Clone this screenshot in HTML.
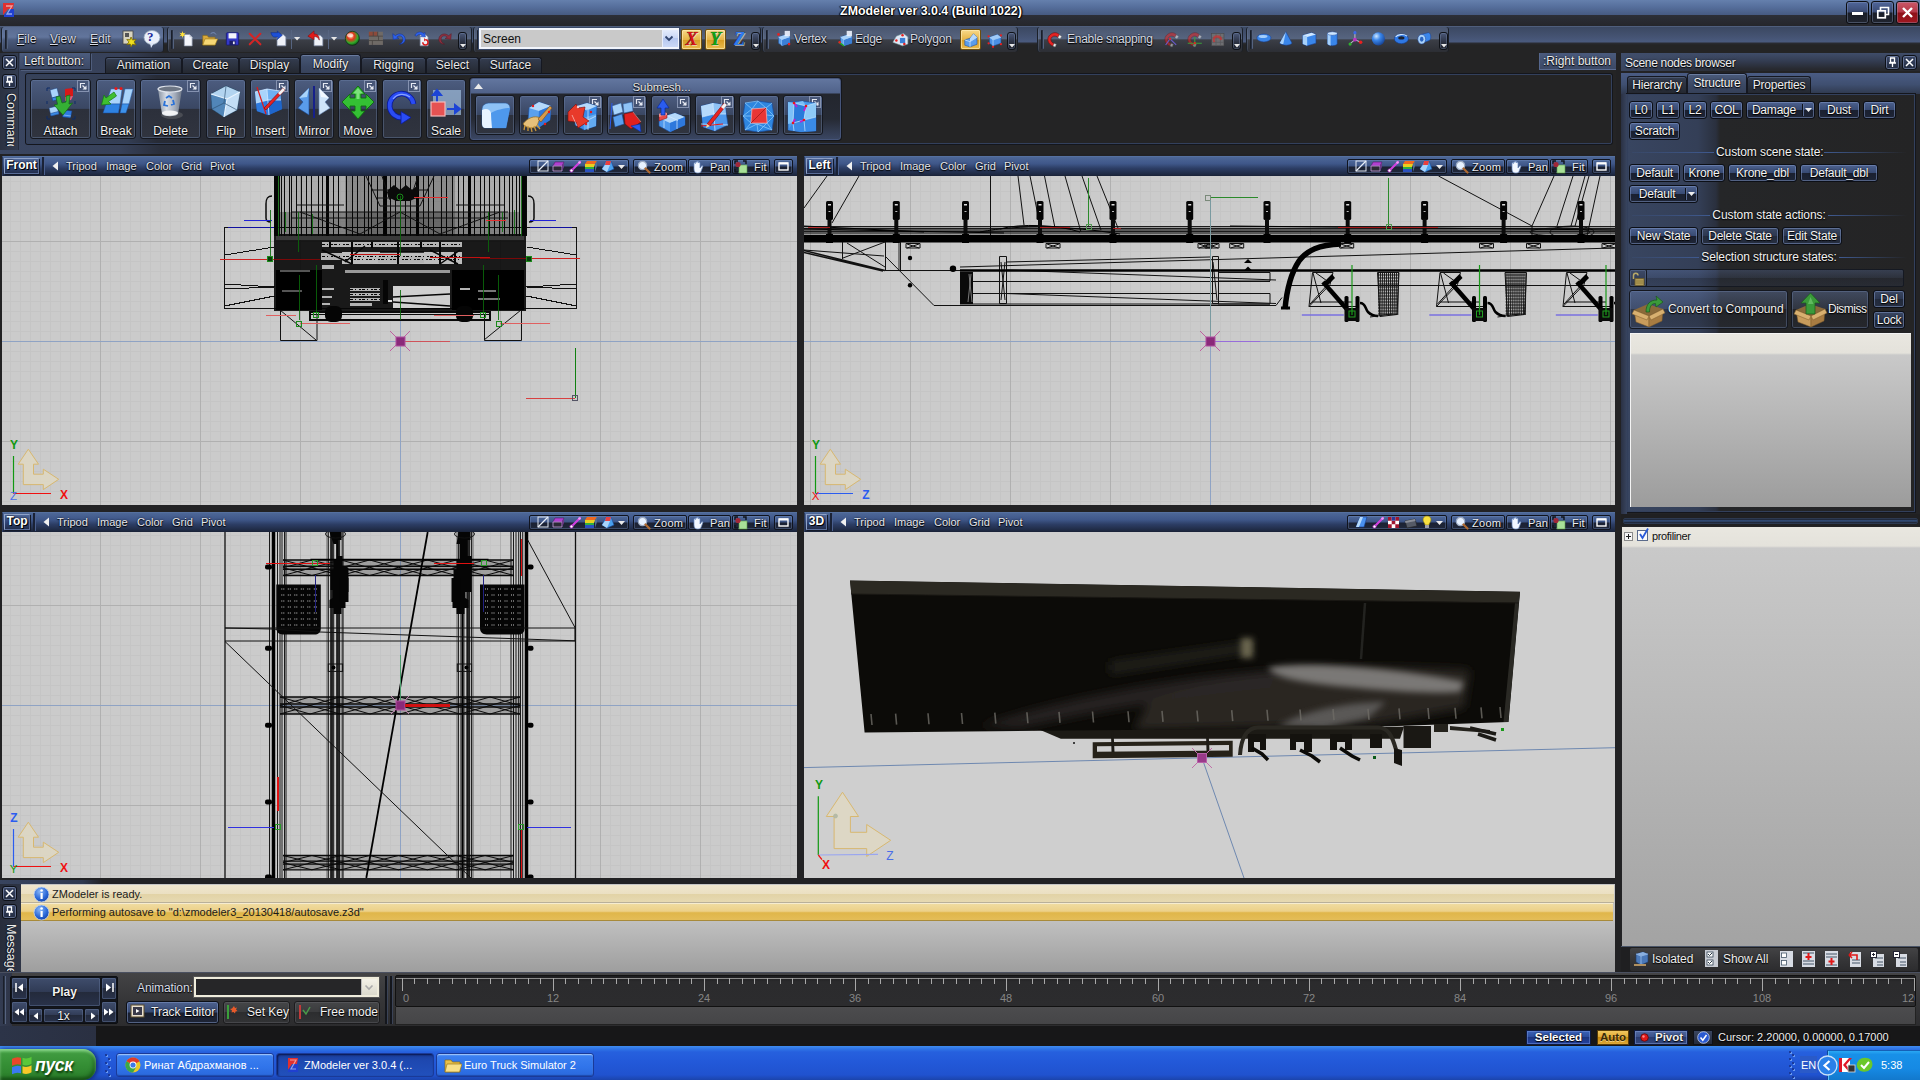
<!DOCTYPE html><html><head><meta charset="utf-8"><title>ZModeler ver 3.0.4 (Build 1022)</title><style>
html,body{margin:0;padding:0;background:#222224;}
body{width:1920px;height:1080px;overflow:hidden;position:relative;font-family:"Liberation Sans",sans-serif;font-size:12px;color:#f0f0f0;}
div,span,svg{position:absolute;box-sizing:border-box;white-space:nowrap;}
.t{text-shadow:0 1px 1px #000,0 0 2px rgba(0,0,0,.8);}
.btn{border:1px solid #11141b;border-radius:3px;background:linear-gradient(#3c4a66,#2d3850 50%,#252d3f 50%,#2a3346);box-shadow:inset 0 0 0 1px rgba(110,130,170,.35);text-align:center;}
.tb{border:1px solid #10131a;border-radius:2px;background:linear-gradient(#33405b,#2a344a 50%,#222a3b 50%,#262e40);box-shadow:inset 0 0 0 1px rgba(105,125,165,.35);text-align:center;line-height:15px;}
.tab{border:1px solid #151821;border-bottom:none;border-radius:3px 3px 0 0;background:linear-gradient(#343d50,#23272f);text-align:center;box-shadow:inset 0 1px 0 rgba(120,140,180,.35);}
.vh{background:linear-gradient(#3d5384,#30436d 45%,#26365b);border-top:1px solid #4a5f8e;}
.vl{color:#e8e8e8;font-size:11.5px;line-height:17px;top:1px;}
</style></head><body>
<div style="left:0px;top:0px;width:1920px;height:15px;background:linear-gradient(#6580ad,#566f9c 45%,#465a82);"></div>
<div style="left:0px;top:15px;width:1920px;height:11px;background:linear-gradient(#2c2f38,#25262b);"></div>
<svg style="left:2px;top:2px" width="14" height="17" viewBox="0 0 14 17"><path d="M1 1h11l-1 6-5 0-5 6z" fill="#e03030"/><path d="M12 4v11H2l0-2 6-6h4z" fill="#2040d0"/><path d="M4 4h6l-5 8h5" stroke="#fff" stroke-width="1.3" fill="none" opacity=".55"/></svg>
<div style="left:760px;top:3px;width:342px;height:16px;text-align:center;font-weight:bold;font-size:12.4px;color:#fff;text-shadow:0 0 2px #000,0 1px 1px #000,1px 0 1px #000,-1px 0 1px #000;line-height:16px">ZModeler ver 3.0.4 (Build 1022)</div>
<div style="left:1846px;top:1px;width:23px;height:23px;background:linear-gradient(#50669a,#3a4a72 48%,#1a1e28 52%,#20242e);border:1px solid #0c0e13;border-radius:3px;box-shadow:inset 0 0 0 1px rgba(150,165,200,.35);"></div>
<div style="left:1871px;top:1px;width:23px;height:23px;background:linear-gradient(#50669a,#3a4a72 48%,#1a1e28 52%,#20242e);border:1px solid #0c0e13;border-radius:3px;box-shadow:inset 0 0 0 1px rgba(150,165,200,.35);"></div>
<div style="left:1896px;top:1px;width:23px;height:23px;background:linear-gradient(#cc5868,#b43848 48%,#8e1018 52%,#a01820);border:1px solid #0c0e13;border-radius:3px;box-shadow:inset 0 0 0 1px rgba(150,165,200,.35);"></div>
<div style="left:1852px;top:12px;width:11px;height:3px;background:#fff;box-shadow:0 0 1px #000"></div>
<svg style="left:1875px;top:5px" width="16" height="16" viewBox="0 0 16 16"><path d="M5.5 5V2.500h8v7H11" stroke="#fff" stroke-width="1.6" fill="none"/><rect x="2.800" y="5.800" width="7.500" height="7" stroke="#fff" stroke-width="1.7" fill="none"/></svg>
<svg style="left:1900px;top:5px" width="16" height="16" viewBox="0 0 16 16"><path d="M3 3l9 9M12 3l-9 9" stroke="#fff" stroke-width="2.400"/></svg>
<div style="left:0px;top:26px;width:1920px;height:27px;background:linear-gradient(#3b4862 0,#43516f 8px,#4a5a7e 15px,#2a2c33 16px,#242425 18px);border-top:1px solid #4f5e7c;"></div>
<div style="left:1px;top:27px;width:163px;height:25px;background:linear-gradient(#596b90,#62759c 40%,#4a5a7c 52%,#3a4661 90%,#2f384d);border-left:1px solid #1b2029;border-right:1px solid #1b2029;border-radius:3px;box-shadow:inset 1px 0 0 rgba(120,140,180,.25);"></div>
<div style="left:5px;top:30px;width:3px;height:19px;background:#2a3243;border-left:1px solid #1a1f2a;border-right:1px solid #55637f;border-radius:1px;"></div>
<div style="left:167px;top:27px;width:305px;height:25px;background:linear-gradient(#4a566f,#56647f 46%,#3b3e46 52%,#2c2e34);border-left:1px solid #1b2029;border-right:1px solid #1b2029;border-radius:3px;box-shadow:inset 1px 0 0 rgba(120,140,180,.25);"></div>
<div style="left:171px;top:30px;width:3px;height:19px;background:#2a3243;border-left:1px solid #1a1f2a;border-right:1px solid #55637f;border-radius:1px;"></div>
<div style="left:473px;top:27px;width:288px;height:25px;background:linear-gradient(#4a566f,#56647f 46%,#3b3e46 52%,#2c2e34);border-left:1px solid #1b2029;border-right:1px solid #1b2029;border-radius:3px;box-shadow:inset 1px 0 0 rgba(120,140,180,.25);"></div>
<div style="left:477px;top:30px;width:3px;height:19px;background:#2a3243;border-left:1px solid #1a1f2a;border-right:1px solid #55637f;border-radius:1px;"></div>
<div style="left:762px;top:27px;width:256px;height:25px;background:linear-gradient(#4a566f,#56647f 46%,#3b3e46 52%,#2c2e34);border-left:1px solid #1b2029;border-right:1px solid #1b2029;border-radius:3px;box-shadow:inset 1px 0 0 rgba(120,140,180,.25);"></div>
<div style="left:766px;top:30px;width:3px;height:19px;background:#2a3243;border-left:1px solid #1a1f2a;border-right:1px solid #55637f;border-radius:1px;"></div>
<div style="left:1037px;top:27px;width:206px;height:25px;background:linear-gradient(#4a566f,#56647f 46%,#3b3e46 52%,#2c2e34);border-left:1px solid #1b2029;border-right:1px solid #1b2029;border-radius:3px;box-shadow:inset 1px 0 0 rgba(120,140,180,.25);"></div>
<div style="left:1041px;top:30px;width:3px;height:19px;background:#2a3243;border-left:1px solid #1a1f2a;border-right:1px solid #55637f;border-radius:1px;"></div>
<div style="left:1246px;top:27px;width:203px;height:25px;background:linear-gradient(#4a566f,#56647f 46%,#3b3e46 52%,#2c2e34);border-left:1px solid #1b2029;border-right:1px solid #1b2029;border-radius:3px;box-shadow:inset 1px 0 0 rgba(120,140,180,.25);"></div>
<div style="left:1250px;top:30px;width:3px;height:19px;background:#2a3243;border-left:1px solid #1a1f2a;border-right:1px solid #55637f;border-radius:1px;"></div>
<div class="t" style="left:17px;top:31px;font-size:12px;color:#d8dce6;line-height:16px"><u>F</u>ile</div>
<div class="t" style="left:50px;top:31px;font-size:12px;color:#d8dce6;line-height:16px"><u>V</u>iew</div>
<div class="t" style="left:90px;top:31px;font-size:12px;color:#d8dce6;line-height:16px"><u>E</u>dit</div>
<svg style="left:122px;top:29px" width="18" height="20" viewBox="0 0 18 20"><rect x="1" y="2" width="10" height="13" fill="#d8d4c0" stroke="#444" stroke-width=".8"/><rect x="3" y="4" width="4" height="4" fill="#555"/><path d="M9 8l1.500 3 3.500-.5-2 2.500 2 3-3.500-.800L9 18l-.8-3-3.200.500 2-2.600-2.200-2.400 3.300.300z" fill="#f0e020" stroke="#7a6a00" stroke-width=".8"/></svg>
<svg style="left:142px;top:29px" width="20" height="20" viewBox="0 0 20 20"><ellipse cx="10" cy="8.500" rx="8" ry="7" fill="#eaf0fb" stroke="#9ab" stroke-width=".8"/><path d="M8 14l1 5 3-5z" fill="#dfe8f8"/></svg>
<div style="left:147px;top:29px;font-size:13px;font-weight:bold;color:#1c2a9a;font-family:'Liberation Serif',serif;line-height:16px">?</div>
<svg style="left:179.1px;top:31.1px" width="15.8" height="15.8" viewBox="0 0 18 18"><path d="M6 4h6l3 3v10H6z" fill="#f4f6fb" stroke="#8a94a8" stroke-width=".8"/><path d="M12 4v3h3z" fill="#c5ccd9"/><path d="M4 0l.8 2.500L7.500 2 5.500 4l2 2-2.700-.5L4 8l-.8-2.500L.5 6l2-2-2-2 2.700.5z" fill="#ffe23a"/></svg>
<svg style="left:201.2px;top:31.1px" width="17.6" height="15.8" viewBox="0 0 20 18"><path d="M2 5h5l1.500 2H16v9H2z" fill="#d9a93a" stroke="#8c6a14" stroke-width=".7"/><path d="M4.500 9H19l-3 7H2z" fill="#f7d774" stroke="#9c7a1c" stroke-width=".7"/><path d="M11 3c3-2 5-1 6 1" stroke="#7f98c8" fill="none" stroke-width="1"/></svg>
<svg style="left:225.0px;top:31.1px" width="15.0" height="15.8" viewBox="0 0 17 18"><rect x="1.500" y="2" width="14" height="14" rx="1" fill="#3438c8" stroke="#15186e" stroke-width=".9"/><rect x="4" y="2.500" width="9" height="6" fill="#f3f4fa"/><rect x="5" y="11" width="7" height="5" fill="#1b1d66"/><rect x="9" y="12" width="2" height="3" fill="#e8e8f4"/></svg>
<svg style="left:248.0px;top:32.0px" width="15.0" height="14.1" viewBox="0 0 17 16"><path d="M2 2l12 12M14 2L2 14" stroke="#d42525" stroke-width="2.300" stroke-linecap="round"/></svg>
<svg style="left:270.2px;top:30.2px" width="17.6" height="17.6" viewBox="0 0 20 20"><path d="M8 5h7l3 3v10H8z" fill="#eef1f8" stroke="#7e8ba6" stroke-width=".8"/><path d="M1 3h8l-1-2 6 5-6 5 1-3H5c-2 0-3-2-4-5z" fill="#1d50d6" stroke="#0b2a86" stroke-width=".6"/></svg>
<div style="left:291px;top:30px;width:1px;height:19px;background:#1a1e27;border-right:1px solid #566480"></div>
<svg style="left:294.4px;top:37.3px" width="6.2" height="4.4" viewBox="0 0 7 5"><path d="M0 0h7L3.500 4z" fill="#e6e6e6"/></svg>
<svg style="left:307.2px;top:30.2px" width="17.6" height="17.6" viewBox="0 0 20 20"><path d="M8 6h7l3 3v9H8z" fill="#eef1f8" stroke="#7e8ba6" stroke-width=".8"/><path d="M1 7l7-6v3.500c4 0 6 2 6 7-1.500-3-3-4-6-4V11z" fill="#e01b1b" stroke="#7c0a0a" stroke-width=".6"/></svg>
<div style="left:328px;top:30px;width:1px;height:19px;background:#1a1e27;border-right:1px solid #566480"></div>
<svg style="left:331.4px;top:37.3px" width="6.2" height="4.4" viewBox="0 0 7 5"><path d="M0 0h7L3.500 4z" fill="#e6e6e6"/></svg>
<svg style="left:344.1px;top:30.1px" width="16.7" height="16.7" viewBox="0 0 19 19"><defs><radialGradient id="sg" cx=".4" cy=".35" r=".7"><stop offset="0" stop-color="#ffd9a0"/><stop offset=".35" stop-color="#e5341e"/><stop offset=".7" stop-color="#2fae2a"/><stop offset="1" stop-color="#0a3d12"/></radialGradient></defs><circle cx="9.500" cy="9.500" r="8" fill="url(#sg)" stroke="#0c2b10" stroke-width=".8"/><ellipse cx="7" cy="6" rx="3.500" ry="2.300" fill="#fff" opacity=".6"/></svg>
<svg style="left:368.1px;top:30.1px" width="16.7" height="16.7" viewBox="0 0 19 19"><rect x="1" y="2" width="16" height="15" fill="#6f6a66"/><rect x="1" y="2" width="10" height="5" fill="#8d4a3a"/><path d="M1 7h16M1 12h16M6 2v5M12 7v5M5 12v5M11 2v5" stroke="#4a4643" stroke-width="1"/></svg>
<svg style="left:391.0px;top:31.0px" width="15.0" height="15.0" viewBox="0 0 17 17"><path d="M3 3v6h6" fill="none" stroke="#2a59e0" stroke-width="0"/><path d="M2 3l.5 6.500L9 8.500 6.500 7C9 4.500 13 5 13.500 9c.3 3-1.500 5-4 6 4.500 0 7-3 6.500-6.500C15.300 3.500 9 1.500 5 5.300z" fill="#2e62ea" stroke="#0f2e96" stroke-width=".6"/></svg>
<svg style="left:414.1px;top:30.2px" width="16.7" height="17.6" viewBox="0 0 19 20"><path d="M7 5h6l3 3v10H7z" fill="#eef1f8" stroke="#7e8ba6" stroke-width=".8"/><path d="M1 6c2-4 7-5 10-2l1.500-1.500.5 5.500-5.500-.5L9 6C7 4.500 4 5 3 7z" fill="#2e62ea" stroke="#0f2e96" stroke-width=".5"/><path d="M10 14a3 3 0 1 0 3-3" stroke="#d81e1e" stroke-width="1.700" fill="none"/><path d="M11.500 9l2 2-2 2.200z" fill="#d81e1e"/></svg>
<svg style="left:438.0px;top:31.0px" width="15.0" height="15.0" viewBox="0 0 17 17"><path d="M15 3l-.5 6.500L8 8.500 10.500 7C8 4.500 4 5 3.500 9c-.3 3 1.500 5 4 6-4.500 0-7-3-6.500-6.500C1.700 3.500 8 1.500 12 5.300z" fill="#8e3040" stroke="#5a1a26" stroke-width=".6"/></svg>
<div style="left:458px;top:32px;width:9px;height:18px;background:linear-gradient(#4a5878,#2a3040 60%,#1d212b);border:1px solid #0f1218;border-radius:3px;box-shadow:inset 0 0 0 1px rgba(130,145,180,.35);"></div>
<svg style="left:459.5px;top:44px" width="6" height="4"><path d="M0 0h6l-3 3.500z" fill="#e8e8e8"/></svg>
<div style="left:479px;top:28px;width:200px;height:21px;background:#c9c9c9;border:2px solid #f2f5fc;border-right-width:1px;box-shadow:0 0 0 1px #3a4a6a;"></div>
<div style="left:483px;top:31px;color:#111;font-size:12px;line-height:16px">Screen</div>
<div style="left:662px;top:30px;width:16px;height:17px;background:linear-gradient(#e4ecfc,#c8d6f6 50%,#b6c8f0 50%,#cad8f6);border-left:1px solid #e8eefa;"></div>
<svg style="left:664px;top:35px" width="10" height="8" viewBox="0 0 10 8"><path d="M1.500 1.500L5 5l3.500-3.500" stroke="#31456f" stroke-width="1.800" fill="none"/></svg>
<div style="left:681px;top:29px;width:21px;height:21px;background:linear-gradient(#f7d98a,#e6b547 50%,#d69a20 50%,#e9bb4e);border:1px solid #6e4e0c;border-radius:2px;box-shadow:inset 0 0 0 1px rgba(255,240,190,.6);"></div>
<div style="left:681px;top:29px;width:21px;height:21px;text-align:center;font:italic bold 18px/21px 'Liberation Serif',serif;color:#d81414;text-shadow:1px 1px 0 rgba(255,255,255,.55),0 0 1px #000">X</div>
<div style="left:705px;top:29px;width:21px;height:21px;background:linear-gradient(#f7d98a,#e6b547 50%,#d69a20 50%,#e9bb4e);border:1px solid #6e4e0c;border-radius:2px;box-shadow:inset 0 0 0 1px rgba(255,240,190,.6);"></div>
<div style="left:705px;top:29px;width:21px;height:21px;text-align:center;font:italic bold 18px/21px 'Liberation Serif',serif;color:#12a012;text-shadow:1px 1px 0 rgba(255,255,255,.55),0 0 1px #000">Y</div>
<div style="left:729px;top:29px;width:21px;height:21px;text-align:center;font:italic bold 18px/21px 'Liberation Serif',serif;color:#2f7af0;text-shadow:1px 1px 0 rgba(255,255,255,.55),0 0 1px #000">Z</div>
<div style="left:751px;top:32px;width:9px;height:18px;background:linear-gradient(#4a5878,#2a3040 60%,#1d212b);border:1px solid #0f1218;border-radius:3px;box-shadow:inset 0 0 0 1px rgba(130,145,180,.35);"></div>
<svg style="left:752.5px;top:44px" width="6" height="4"><path d="M0 0h6l-3 3.500z" fill="#e8e8e8"/></svg>
<svg style="left:775.2px;top:30.2px" width="17.6" height="17.6" viewBox="0 0 20 20"><path d="M4 8l9-3 4 3v7l-9 3-4-3z" fill="#5ea0ea" stroke="#1f4f9c" stroke-width=".6"/><path d="M4 8l4 3 9-3M8 11v7" stroke="#bfe0ff" stroke-width=".8" fill="none"/><path d="M8 11l9-3v7l-9 3z" fill="#3b7fd6"/><path d="M4 8l9-3 4 3-9 3z" fill="#a9d2fb"/><circle cx="4" cy="5" r="1.500" fill="#e82020"/><circle cx="16" cy="16" r="1.500" fill="#e82020"/><rect x="11" y="1" width="6" height="6" fill="#eef4ff" opacity=".9"/></svg>
<div class="t" style="left:794px;top:31px;color:#d4d8e2;line-height:16px;letter-spacing:-.25px">Vertex</div>
<svg style="left:837.2px;top:30.2px" width="17.6" height="17.6" viewBox="0 0 20 20"><path d="M4 8l9-3 4 3v7l-9 3-4-3z" fill="#5ea0ea" stroke="#1f4f9c" stroke-width=".6"/><path d="M4 8l4 3 9-3M8 11v7" stroke="#bfe0ff" stroke-width=".8" fill="none"/><path d="M8 11l9-3v7l-9 3z" fill="#3b7fd6"/><path d="M4 8l9-3 4 3-9 3z" fill="#a9d2fb"/><path d="M2 14l6 4" stroke="#20b020" stroke-width="1.500"/><circle cx="3" cy="14" r="1.400" fill="#e82020"/><rect x="11" y="1" width="6" height="6" fill="#eef4ff" opacity=".9"/></svg>
<div class="t" style="left:855px;top:31px;color:#d4d8e2;line-height:16px;letter-spacing:-.25px">Edge</div>
<svg style="left:892.2px;top:30.2px" width="17.6" height="17.6" viewBox="0 0 20 20"><path d="M1 14l4-7 8-3 5 4v8l-6 2z" fill="#dfe8f6" stroke="#8aa" stroke-width=".6"/><rect x="9" y="9" width="6" height="6" fill="#3b7fd6"/><circle cx="5" cy="12" r="1.400" fill="#e82020"/><circle cx="12" cy="6" r="1.400" fill="#e82020"/><circle cx="14" cy="16" r="1.400" fill="#e82020"/></svg>
<div class="t" style="left:910px;top:31px;color:#d4d8e2;line-height:16px;letter-spacing:-.25px">Polygon</div>
<div style="left:960px;top:29px;width:21px;height:21px;background:linear-gradient(#f7d98a,#e6b547 50%,#d69a20 50%,#e9bb4e);border:1px solid #6e4e0c;border-radius:2px;box-shadow:inset 0 0 0 1px rgba(255,240,190,.6);"></div>
<svg style="left:963.1px;top:32.1px" width="15.8" height="15.8" viewBox="0 0 18 18"><path d="M2 9l6-2 4-5 4 4v8l-8 3-6-2z" fill="#5a9cea" stroke="#1c4a96" stroke-width=".6"/><path d="M2 9l6 2 8-5M8 11v6" stroke="#d5ebff" stroke-width=".8" fill="none"/><path d="M8 7l4-5 4 4-8 5z" fill="#b7d9fc"/></svg>
<svg style="left:986.2px;top:31.2px" width="17.6" height="17.6" viewBox="0 0 20 20"><path d="M4 7l9-3 4 3v7l-9 3-4-3z" fill="#4a90e6" stroke="#1f4f9c" stroke-width=".6"/><path d="M4 7l4 3 9-3M8 10v7" stroke="#bfe0ff" stroke-width=".8" fill="none"/><path d="M4 7l9-3 4 3-9 3z" fill="#9fcaf8"/><circle cx="3" cy="6" r="1.300" fill="#e82020"/><circle cx="17" cy="5" r="1.300" fill="#e82020"/><circle cx="8" cy="18" r="1.300" fill="#e82020"/><circle cx="17" cy="15" r="1.300" fill="#e82020"/><circle cx="3" cy="14" r="1.300" fill="#e82020"/></svg>
<div style="left:1007px;top:32px;width:9px;height:18px;background:linear-gradient(#4a5878,#2a3040 60%,#1d212b);border:1px solid #0f1218;border-radius:3px;box-shadow:inset 0 0 0 1px rgba(130,145,180,.35);"></div>
<svg style="left:1008.5px;top:44px" width="6" height="4"><path d="M0 0h6l-3 3.500z" fill="#e8e8e8"/></svg>
<svg style="left:1046.2px;top:30.2px" width="17.6" height="17.6" viewBox="0 0 20 20"><g opacity="1" transform="rotate(-40 10 10)"><path d="M3 15C0 9 3 3 9 3c5 0 8 3 8 7l-3.500 1c0-2.500-2-4.500-4.500-4.500-3.500 0-5 3.500-3 7.500z" fill="#e32424" stroke="#6a0a0a" stroke-width=".6"/><path d="M3 15l3-1.500 1.300 2.500-3 1.500zM13.500 11l3.500-1 .8 3-3.500 1z" fill="#ececec" stroke="#666" stroke-width=".5"/></g></svg>
<div class="t" style="left:1067px;top:31px;color:#d4d8e2;line-height:16px;letter-spacing:-.25px">Enable snapping</div>
<svg style="left:1163.2px;top:30.2px" width="17.6" height="17.6" viewBox="0 0 20 20"><g opacity=".55" transform="rotate(-40 10 10)"><path d="M3 15C0 9 3 3 9 3c5 0 8 3 8 7l-3.500 1c0-2.500-2-4.500-4.500-4.500-3.500 0-5 3.500-3 7.500z" fill="#e32424" stroke="#6a0a0a" stroke-width=".6"/><path d="M3 15l3-1.500 1.300 2.500-3 1.500zM13.500 11l3.500-1 .8 3-3.500 1z" fill="#ececec" stroke="#666" stroke-width=".5"/></g><path d="M3 17l5-7 7 7" stroke="#6a5acd" stroke-width="1.200" fill="none"/><circle cx="8" cy="10" r="1.300" fill="#e82020"/></svg>
<svg style="left:1186.2px;top:30.2px" width="17.6" height="17.6" viewBox="0 0 20 20"><g opacity=".55" transform="rotate(-40 10 10)"><path d="M3 15C0 9 3 3 9 3c5 0 8 3 8 7l-3.500 1c0-2.500-2-4.500-4.500-4.500-3.500 0-5 3.500-3 7.500z" fill="#e32424" stroke="#6a0a0a" stroke-width=".6"/><path d="M3 15l3-1.500 1.300 2.500-3 1.500zM13.500 11l3.500-1 .8 3-3.500 1z" fill="#ececec" stroke="#666" stroke-width=".5"/></g><path d="M2 15h16M10 8v10" stroke="#3aa03a" stroke-width="1.200" fill="none"/><circle cx="10" cy="15" r="1.300" fill="#e82020"/></svg>
<svg style="left:1209.2px;top:30.2px" width="17.6" height="17.6" viewBox="0 0 20 20"><rect x="3" y="4" width="14" height="14" fill="#6e6e72" stroke="#444" stroke-width=".6"/><path d="M3 9h14M3 14h14M8 4v14M13 4v14" stroke="#58585c" stroke-width=".8"/><g opacity=".6"><path d="M5 14C3 10 5 6 9 6c4 0 6 2 6 5l-2.500.7c0-1.800-1.500-3-3.200-3-2.500 0-3.500 2.300-2 5z" fill="#e32424"/></g></svg>
<div style="left:1232px;top:32px;width:9px;height:18px;background:linear-gradient(#4a5878,#2a3040 60%,#1d212b);border:1px solid #0f1218;border-radius:3px;box-shadow:inset 0 0 0 1px rgba(130,145,180,.35);"></div>
<svg style="left:1233.5px;top:44px" width="6" height="4"><path d="M0 0h6l-3 3.500z" fill="#e8e8e8"/></svg>
<svg style="left:1256.2px;top:30.2px" width="17.6" height="17.6" viewBox="0 0 20 20"><ellipse cx="9" cy="9" rx="8" ry="4.500" fill="#3a86ea" stroke="#1a3f8e" stroke-width=".6"/><ellipse cx="8" cy="7.500" rx="5" ry="1.700" fill="#bfe0ff" opacity=".8"/></svg>
<svg style="left:1278.2px;top:30.2px" width="17.6" height="17.6" viewBox="0 0 20 20"><path d="M9 2l7 13c-3 3-10 3-14 0z" fill="#3a86ea" stroke="#1a3f8e" stroke-width=".6"/><path d="M9 2l-3 14c-2-.3-3-.7-4-1.300z" fill="#a7d1fb"/></svg>
<svg style="left:1301.2px;top:30.2px" width="17.6" height="17.6" viewBox="0 0 20 20"><path d="M2 6l10-3 5 2v10l-10 3-5-2z" fill="#3a86ea" stroke="#1a3f8e" stroke-width=".6"/><path d="M2 6l5 2v10l-5-2z" fill="#a7d1fb"/><path d="M2 6l10-3 5 2-10 3z" fill="#cfe7ff"/></svg>
<svg style="left:1324.2px;top:30.2px" width="17.6" height="17.6" viewBox="0 0 20 20"><path d="M4 4v12c2 2.500 9 2.500 11 0V4z" fill="#3a86ea" stroke="#1a3f8e" stroke-width=".6"/><path d="M4 4v12c1 1 2 1.500 3.500 1.800V5z" fill="#a7d1fb"/><ellipse cx="9.500" cy="4" rx="5.500" ry="2" fill="#cfe7ff" stroke="#1a3f8e" stroke-width=".5"/></svg>
<svg style="left:1347.2px;top:30.2px" width="17.6" height="17.6" viewBox="0 0 20 20"><path d="M9 2v9M9 11l-6 5M9 11l7 3" stroke="#b8b8c8" stroke-width="1.200"/><circle cx="9" cy="3" r="1.800" fill="#3a6aea"/><circle cx="3.500" cy="16" r="1.800" fill="#2fb02f"/><circle cx="15.500" cy="14" r="2" fill="#e82020"/><circle cx="9" cy="11" r="2.200" fill="#c030c0"/></svg>
<svg style="left:1370.2px;top:30.2px" width="17.6" height="17.6" viewBox="0 0 20 20"><defs><radialGradient id="bs" cx=".35" cy=".3" r=".8"><stop offset="0" stop-color="#cfe7ff"/><stop offset=".4" stop-color="#3a86ea"/><stop offset="1" stop-color="#123a8a"/></radialGradient></defs><circle cx="9.500" cy="10" r="7.500" fill="url(#bs)"/></svg>
<svg style="left:1393.2px;top:30.2px" width="17.6" height="17.6" viewBox="0 0 20 20"><ellipse cx="9.500" cy="10" rx="8" ry="5.500" fill="#2f78e4" stroke="#123a8a" stroke-width=".6"/><ellipse cx="9.500" cy="9" rx="3.500" ry="1.800" fill="#1c2230"/><path d="M3 8c2-3 9-4 13-1" stroke="#cfe7ff" stroke-width="1.200" fill="none"/></svg>
<svg style="left:1416.2px;top:30.2px" width="17.6" height="17.6" viewBox="0 0 20 20"><path d="M6 5l8-2c3 0 4 7 1 9l-8 3z" fill="#3a86ea" stroke="#1a3f8e" stroke-width=".6"/><ellipse cx="6.500" cy="10.500" rx="4.500" ry="5.500" fill="#a7d1fb" stroke="#1a3f8e" stroke-width=".6"/><ellipse cx="6.500" cy="10.500" rx="2" ry="2.800" fill="#2a64c0"/></svg>
<div style="left:1439px;top:32px;width:9px;height:18px;background:linear-gradient(#4a5878,#2a3040 60%,#1d212b);border:1px solid #0f1218;border-radius:3px;box-shadow:inset 0 0 0 1px rgba(130,145,180,.35);"></div>
<svg style="left:1440.5px;top:44px" width="6" height="4"><path d="M0 0h6l-3 3.500z" fill="#e8e8e8"/></svg>
<div style="left:0px;top:53px;width:1618px;height:101px;background:linear-gradient(90deg,#3a4661 0,#374159 120px,#2a2f3c 160px,#252629 400px,#242425 700px);"></div>
<div style="left:0px;top:154px;width:1618px;height:2px;background:#1e1e20;"></div>
<div style="left:0px;top:53px;width:19px;height:97px;background:linear-gradient(90deg,#2b3242,#333c50);border-right:1px solid #262d3d;"></div>
<div style="left:2px;top:55px;width:15px;height:15px;background:linear-gradient(#3a4766,#222b40);border:1px solid #0d1017;border-radius:3px;box-shadow:inset 0 0 0 1px rgba(150,165,205,.5);"></div>
<div style="left:2px;top:74px;width:15px;height:15px;background:linear-gradient(#3a4766,#222b40);border:1px solid #0d1017;border-radius:3px;box-shadow:inset 0 0 0 1px rgba(150,165,205,.5);"></div>
<svg style="left:5px;top:58px" width="9" height="9" viewBox="0 0 9 9"><path d="M1 1l7 7M8 1L1 8" stroke="#fff" stroke-width="1.500"/></svg>
<svg style="left:5px;top:76px" width="9" height="11" viewBox="0 0 9 11"><path d="M2.500 1h4v4.500h-4zM1 6h7M4.500 6v4" stroke="#fff" stroke-width="1.300" fill="none"/></svg>
<div class="t" style="left:-16px;top:112px;width:53px;height:15px;transform:rotate(90deg);font-size:12.5px;line-height:15px;color:#eee;text-align:left;overflow:hidden">Commands</div>
<div style="left:20px;top:53px;width:71px;height:17px;background:linear-gradient(#4c5c7e,#3c4966);border-right:1px solid #222837;border-bottom:1px solid #222837;box-shadow:1px 1px 0 #4f5d7c;"></div>
<div class="t" style="left:24px;top:54px;line-height:14px;color:#ececec;font-size:12px">Left button:</div>
<div class="tab" style="left:105px;top:57px;width:77px;height:17px;"></div>
<div class="t" style="left:105px;top:58px;width:77px;text-align:center;line-height:14px;color:#eaeaea">Animation</div>
<div class="tab" style="left:182px;top:57px;width:57px;height:17px;"></div>
<div class="t" style="left:182px;top:58px;width:57px;text-align:center;line-height:14px;color:#eaeaea">Create</div>
<div class="tab" style="left:239px;top:57px;width:61px;height:17px;"></div>
<div class="t" style="left:239px;top:58px;width:61px;text-align:center;line-height:14px;color:#eaeaea">Display</div>
<div style="left:300px;top:54px;width:61px;height:21px;background:linear-gradient(#485877,#3a4762 60%,#364159);border:1px solid #151821;border-bottom:none;border-radius:3px 3px 0 0;box-shadow:inset 0 1px 0 rgba(140,160,200,.5);"></div>
<div class="t" style="left:300px;top:57px;width:61px;text-align:center;line-height:14px;color:#f0f0f0">Modify</div>
<div class="tab" style="left:361px;top:57px;width:65px;height:17px;"></div>
<div class="t" style="left:361px;top:58px;width:65px;text-align:center;line-height:14px;color:#eaeaea">Rigging</div>
<div class="tab" style="left:426px;top:57px;width:53px;height:17px;"></div>
<div class="t" style="left:426px;top:58px;width:53px;text-align:center;line-height:14px;color:#eaeaea">Select</div>
<div class="tab" style="left:479px;top:57px;width:63px;height:17px;"></div>
<div class="t" style="left:479px;top:58px;width:63px;text-align:center;line-height:14px;color:#eaeaea">Surface</div>
<div style="left:26px;top:74px;width:1586px;height:70px;border:1px solid #33405c;border-radius:2px;background:linear-gradient(90deg,#374259 0,#333d53 100px,#272b36 130px,#252628 300px,#242425 600px);box-shadow:0 0 0 1px #14161c;"></div>
<div style="left:30px;top:79px;width:61px;height:60px;border:1px solid #14171f;border-radius:3px;background:linear-gradient(#4c5c7f,#3a4763 49%,#2c303b 50%,#30343f);box-shadow:inset 0 0 0 1px rgba(110,130,170,.42);"></div>
<div class="t" style="left:30px;top:124px;width:61px;text-align:center;line-height:14px;color:#f2f2f2">Attach</div>
<div style="left:77px;top:80px;width:12px;height:12px;border:1px solid #8592b0;background:rgba(70,84,116,.55);"></div>
<svg style="left:79px;top:82px" width="8" height="8" viewBox="0 0 8 8"><path d="M1.500 6V1.500H6" stroke="#e6e9f2" stroke-width="1.200" fill="none"/><path d="M3.500 3.500L7 7" stroke="#e6e9f2" stroke-width="1.200"/><path d="M7.500 3.500v4h-4z" fill="#e6e9f2"/></svg>
<div style="left:96px;top:79px;width:40px;height:60px;border:1px solid #14171f;border-radius:3px;background:linear-gradient(#4c5c7f,#3a4763 49%,#2c303b 50%,#30343f);box-shadow:inset 0 0 0 1px rgba(110,130,170,.42);"></div>
<div class="t" style="left:96px;top:124px;width:40px;text-align:center;line-height:14px;color:#f2f2f2">Break</div>
<div style="left:140px;top:79px;width:61px;height:60px;border:1px solid #14171f;border-radius:3px;background:linear-gradient(#4c5c7f,#3a4763 49%,#2c303b 50%,#30343f);box-shadow:inset 0 0 0 1px rgba(110,130,170,.42);"></div>
<div class="t" style="left:140px;top:124px;width:61px;text-align:center;line-height:14px;color:#f2f2f2">Delete</div>
<div style="left:187px;top:80px;width:12px;height:12px;border:1px solid #8592b0;background:rgba(70,84,116,.55);"></div>
<svg style="left:189px;top:82px" width="8" height="8" viewBox="0 0 8 8"><path d="M1.500 6V1.500H6" stroke="#e6e9f2" stroke-width="1.200" fill="none"/><path d="M3.500 3.500L7 7" stroke="#e6e9f2" stroke-width="1.200"/><path d="M7.500 3.500v4h-4z" fill="#e6e9f2"/></svg>
<div style="left:206px;top:79px;width:40px;height:60px;border:1px solid #14171f;border-radius:3px;background:linear-gradient(#4c5c7f,#3a4763 49%,#2c303b 50%,#30343f);box-shadow:inset 0 0 0 1px rgba(110,130,170,.42);"></div>
<div class="t" style="left:206px;top:124px;width:40px;text-align:center;line-height:14px;color:#f2f2f2">Flip</div>
<div style="left:250px;top:79px;width:40px;height:60px;border:1px solid #14171f;border-radius:3px;background:linear-gradient(#4c5c7f,#3a4763 49%,#2c303b 50%,#30343f);box-shadow:inset 0 0 0 1px rgba(110,130,170,.42);"></div>
<div class="t" style="left:250px;top:124px;width:40px;text-align:center;line-height:14px;color:#f2f2f2">Insert</div>
<div style="left:276px;top:80px;width:12px;height:12px;border:1px solid #8592b0;background:rgba(70,84,116,.55);"></div>
<svg style="left:278px;top:82px" width="8" height="8" viewBox="0 0 8 8"><path d="M1.500 6V1.500H6" stroke="#e6e9f2" stroke-width="1.200" fill="none"/><path d="M3.500 3.500L7 7" stroke="#e6e9f2" stroke-width="1.200"/><path d="M7.500 3.500v4h-4z" fill="#e6e9f2"/></svg>
<div style="left:294px;top:79px;width:40px;height:60px;border:1px solid #14171f;border-radius:3px;background:linear-gradient(#4c5c7f,#3a4763 49%,#2c303b 50%,#30343f);box-shadow:inset 0 0 0 1px rgba(110,130,170,.42);"></div>
<div class="t" style="left:294px;top:124px;width:40px;text-align:center;line-height:14px;color:#f2f2f2">Mirror</div>
<div style="left:320px;top:80px;width:12px;height:12px;border:1px solid #8592b0;background:rgba(70,84,116,.55);"></div>
<svg style="left:322px;top:82px" width="8" height="8" viewBox="0 0 8 8"><path d="M1.500 6V1.500H6" stroke="#e6e9f2" stroke-width="1.200" fill="none"/><path d="M3.500 3.500L7 7" stroke="#e6e9f2" stroke-width="1.200"/><path d="M7.500 3.500v4h-4z" fill="#e6e9f2"/></svg>
<div style="left:338px;top:79px;width:40px;height:60px;border:1px solid #14171f;border-radius:3px;background:linear-gradient(#4c5c7f,#3a4763 49%,#2c303b 50%,#30343f);box-shadow:inset 0 0 0 1px rgba(110,130,170,.42);"></div>
<div class="t" style="left:338px;top:124px;width:40px;text-align:center;line-height:14px;color:#f2f2f2">Move</div>
<div style="left:364px;top:80px;width:12px;height:12px;border:1px solid #8592b0;background:rgba(70,84,116,.55);"></div>
<svg style="left:366px;top:82px" width="8" height="8" viewBox="0 0 8 8"><path d="M1.500 6V1.500H6" stroke="#e6e9f2" stroke-width="1.200" fill="none"/><path d="M3.500 3.500L7 7" stroke="#e6e9f2" stroke-width="1.200"/><path d="M7.500 3.500v4h-4z" fill="#e6e9f2"/></svg>
<div style="left:382px;top:79px;width:40px;height:60px;border:1px solid #14171f;border-radius:3px;background:linear-gradient(#4c5c7f,#3a4763 49%,#2c303b 50%,#30343f);box-shadow:inset 0 0 0 1px rgba(110,130,170,.42);"></div>
<div style="left:408px;top:80px;width:12px;height:12px;border:1px solid #8592b0;background:rgba(70,84,116,.55);"></div>
<svg style="left:410px;top:82px" width="8" height="8" viewBox="0 0 8 8"><path d="M1.500 6V1.500H6" stroke="#e6e9f2" stroke-width="1.200" fill="none"/><path d="M3.500 3.500L7 7" stroke="#e6e9f2" stroke-width="1.200"/><path d="M7.500 3.500v4h-4z" fill="#e6e9f2"/></svg>
<div style="left:426px;top:79px;width:40px;height:60px;border:1px solid #14171f;border-radius:3px;background:linear-gradient(#4c5c7f,#3a4763 49%,#2c303b 50%,#30343f);box-shadow:inset 0 0 0 1px rgba(110,130,170,.42);"></div>
<div class="t" style="left:426px;top:124px;width:40px;text-align:center;line-height:14px;color:#f2f2f2">Scale</div>
<svg style="left:44px;top:84px" width="34" height="36" viewBox="0 0 34 36"><g stroke="#183a7a" stroke-width=".5"><path d="M6 6l7-2 2 8-7 2z" fill="#a9d4fb"/><path d="M8 14l7-2 .8 3-7 2z" fill="#3a8ae6"/><path d="M5 24l8-2 2 8-8 2z" fill="#a9d4fb"/><path d="M7 32l8-2-.600-2.500-8 2z" fill="#3a8ae6"/><path d="M20 26l8 1-1.500 7-8-1z" fill="#2e7ae0"/><path d="M19.500 31l7.500 1" stroke="#bfe0ff"/></g><path d="M21 5l8-1v8l-8 1z" fill="#d81818"/><path d="M21 13l8-1-2 4-6 1z" fill="#f05a7a"/><path d="M12 13l4-1 2 7 4-1 0-6 4-1-1 9 3.500-1L19 31 10 21l3.500-.8z" fill="#35b035" stroke="#136a13" stroke-width=".7"/><g stroke="#0c2a66" stroke-width="1" fill="none" stroke-dasharray="3 2"><path d="M3 4h5M3 4v5M3 35h5M3 35v-5M31 4h-5M31 4v5M31 35h-5M31 35v-5M3 17v4M31 17v4"/></g></svg>
<svg style="left:99px;top:84px" width="36" height="34" viewBox="0 0 36 34"><path d="M12 5h11l-2 15H7z" fill="#a9d4fb" stroke="#2a6ac0" stroke-width=".5"/><path d="M7 20h14l-1.500 9H4z" fill="#2e82e2" stroke="#1a4a9a" stroke-width=".5"/><path d="M26 5h8l-4 15h-7z" fill="#a9d4fb" stroke="#2a6ac0" stroke-width=".5"/><path d="M23 20h7l-3 9h-6z" fill="#3d92ea" stroke="#1a4a9a" stroke-width=".5"/><circle cx="17" cy="4.500" r="1.600" fill="#e81818"/><circle cx="22" cy="4.500" r="1.600" fill="#e81818"/><path d="M15 8l-8 6-2-3-2.500 10 9.500-1-2.500-2.500 8-5.500z" fill="#3fbf2f" stroke="#147a14" stroke-width=".7"/></svg>
<svg style="left:155px;top:84px" width="32" height="36" viewBox="0 0 32 36"><defs><linearGradient id="bn" x1="0" x2="1"><stop offset="0" stop-color="#8e98a6"/><stop offset=".35" stop-color="#e6ebf2"/><stop offset=".7" stop-color="#aeb6c3"/><stop offset="1" stop-color="#6f7886"/></linearGradient></defs><ellipse cx="17" cy="31" rx="11" ry="4" fill="#55585e" opacity=".7"/><path d="M3 5l4 25c2 3 14 3 16 0l4-25z" fill="url(#bn)" opacity=".92"/><ellipse cx="15" cy="5" rx="12" ry="3" fill="#6d7684" stroke="#dfe4ec" stroke-width="1.200"/><ellipse cx="15" cy="29" rx="8" ry="2.500" fill="#f2f3f5"/><path d="M11 14l3-2 3 2M18 16l1 4-3 1M10 17l-1 4 4 1" stroke="#2a72d8" stroke-width="1.800" fill="none"/></svg>
<svg style="left:208px;top:83px" width="36" height="36" viewBox="0 0 36 36"><path d="M18 3l14 6-3 18-13 7L4 26 3 11z" fill="#7fb0dc" stroke="#23425e" stroke-width="1"/><path d="M3 11l15-8 14 6-13 7z" fill="#b8d8f2" opacity=".9"/><path d="M19 16l13-7-3 18-13 7z" fill="#cfe6fa" opacity=".85"/><path d="M3 11l16 5-3 18L4 26z" fill="#4d82b4" opacity=".9"/><path d="M19 16L3 11M19 16l13-7M19 16l-3 18" stroke="#e8f4ff" stroke-width="1.200"/><path d="M18 3l-2 17M16 20L4 26M16 20l13 7" stroke="#2c4f70" stroke-width=".8" opacity=".8"/></svg>
<svg style="left:252px;top:84px" width="36" height="34" viewBox="0 0 36 34"><path d="M3 8l12-3 13 2 2 18-14 6-11-4z" fill="#3a8ae6" stroke="#1a4a9a" stroke-width=".6"/><path d="M3 8l12-3 1 11-12 3z" fill="#a9d4fb"/><path d="M15 5l13 2 1 9-13 0z" fill="#6eb0f2"/><path d="M4 19l12-3 1 15-12-4z" fill="#2e7ae0"/><path d="M16 16h13l1 9-13 6z" fill="#1f66cc"/><path d="M3 8l12-3 13 2M4 19l12-3h13M15 5l2 26" stroke="#d9ecff" stroke-width=".8" fill="none"/><path d="M5 3l9 27" stroke="#e01818" stroke-width="1.200"/><path d="M12 24L31 4l2 2-19 20z" fill="#e82222" stroke="#7a0a0a" stroke-width=".6"/><path d="M26 9l5-5 2 2-5 5z" fill="#f4f4f4"/></svg>
<svg style="left:297px;top:86px" width="34" height="32" viewBox="0 0 34 32"><path d="M12 2v27L1 22l5-6-4-4z" fill="#5a9cea" stroke="#1a4a9a" stroke-width=".6"/><path d="M12 2l-2 9-8 1z" fill="#a9d4fb"/><path d="M22 2v27l11-7-5-6 4-4z" fill="#cfe4fa" stroke="#6a8ab8" stroke-width=".6"/><path d="M22 2l2 9 8 1z" fill="#f2f8ff"/><path d="M17 0v32" stroke="#16208a" stroke-width="2"/></svg>
<svg style="left:341px;top:85px" width="34" height="34" viewBox="0 0 34 34"><path d="M17 1l7 8h-4v4h5V9l8 8-8 8v-4h-5v5h4l-7 8-7-8h4v-5H9v4l-8-8 8-8v4h5V9h-4z" fill="#34c034" stroke="#0f6a0f" stroke-width=".9"/><path d="M17 3l5 5.500h-3.500V14h-3V8.500H12z" fill="#8fe88f" opacity=".8"/></svg>
<svg style="left:386px;top:90px" width="32" height="36" viewBox="0 0 32 36"><path d="M27.500 14A12 12 0 1 0 17 27.500" stroke="#0a1a9a" stroke-width="5.500" fill="none"/><path d="M27.500 14A12 12 0 1 0 17 27.500" stroke="#2a4cf4" stroke-width="3.800" fill="none"/><path d="M15 21.500l10 6-10 6.500z" fill="#2a4cf4" stroke="#0a1a9a" stroke-width=".8"/><path d="M7 9A12 12 0 0 1 24 7" stroke="#8aa4ff" stroke-width="1.200" fill="none"/></svg>
<svg style="left:429px;top:88px" width="34" height="30" viewBox="0 0 34 30"><rect x="4" y="2" width="28" height="25" fill="#9bb7d6" opacity=".75"/><path d="M8 14V5M8 2l-4 5h8z" stroke="#1c44d6" stroke-width="2" fill="#1c44d6"/><path d="M18 21h9M31 21l-5-4v8z" stroke="#1c44d6" stroke-width="2" fill="#1c44d6"/><rect x="2" y="14" width="14" height="14" fill="#e65252" stroke="#f4baba" stroke-width="1.200"/></svg>
<div style="left:470px;top:78px;width:371px;height:62px;border:1px solid #46557a;border-radius:3px;background:linear-gradient(#62769f,#50628a 14px,#23262e 15px,#262a34 40px,#3a4662 60px);box-shadow:0 0 0 1px #14161c;"></div>
<svg style="left:474px;top:83px" width="9" height="7" viewBox="0 0 9 7"><path d="M0 6l4.500-5.500L9 6z" fill="#eaeaea"/></svg>
<div class="t" style="left:470px;top:80px;width:383px;text-align:center;line-height:14px;color:#e6e6e6;font-size:11.5px">Submesh...</div>
<div style="left:475px;top:95px;width:40px;height:40px;border:1px solid #14171f;border-radius:3px;background:linear-gradient(#4c5c7f,#3a4763 49%,#2c303b 50%,#30343f);box-shadow:inset 0 0 0 1px rgba(110,130,170,.42);"></div>
<div style="left:519px;top:95px;width:40px;height:40px;border:1px solid #14171f;border-radius:3px;background:linear-gradient(#4c5c7f,#3a4763 49%,#2c303b 50%,#30343f);box-shadow:inset 0 0 0 1px rgba(110,130,170,.42);"></div>
<div style="left:563px;top:95px;width:40px;height:40px;border:1px solid #14171f;border-radius:3px;background:linear-gradient(#4c5c7f,#3a4763 49%,#2c303b 50%,#30343f);box-shadow:inset 0 0 0 1px rgba(110,130,170,.42);"></div>
<div style="left:589px;top:96px;width:12px;height:12px;border:1px solid #8592b0;background:rgba(70,84,116,.55);"></div>
<svg style="left:591px;top:98px" width="8" height="8" viewBox="0 0 8 8"><path d="M1.500 6V1.500H6" stroke="#e6e9f2" stroke-width="1.200" fill="none"/><path d="M3.500 3.500L7 7" stroke="#e6e9f2" stroke-width="1.200"/><path d="M7.500 3.500v4h-4z" fill="#e6e9f2"/></svg>
<div style="left:607px;top:95px;width:40px;height:40px;border:1px solid #14171f;border-radius:3px;background:linear-gradient(#4c5c7f,#3a4763 49%,#2c303b 50%,#30343f);box-shadow:inset 0 0 0 1px rgba(110,130,170,.42);"></div>
<div style="left:633px;top:96px;width:12px;height:12px;border:1px solid #8592b0;background:rgba(70,84,116,.55);"></div>
<svg style="left:635px;top:98px" width="8" height="8" viewBox="0 0 8 8"><path d="M1.500 6V1.500H6" stroke="#e6e9f2" stroke-width="1.200" fill="none"/><path d="M3.500 3.500L7 7" stroke="#e6e9f2" stroke-width="1.200"/><path d="M7.500 3.500v4h-4z" fill="#e6e9f2"/></svg>
<div style="left:651px;top:95px;width:40px;height:40px;border:1px solid #14171f;border-radius:3px;background:linear-gradient(#4c5c7f,#3a4763 49%,#2c303b 50%,#30343f);box-shadow:inset 0 0 0 1px rgba(110,130,170,.42);"></div>
<div style="left:677px;top:96px;width:12px;height:12px;border:1px solid #8592b0;background:rgba(70,84,116,.55);"></div>
<svg style="left:679px;top:98px" width="8" height="8" viewBox="0 0 8 8"><path d="M1.500 6V1.500H6" stroke="#e6e9f2" stroke-width="1.200" fill="none"/><path d="M3.500 3.500L7 7" stroke="#e6e9f2" stroke-width="1.200"/><path d="M7.500 3.500v4h-4z" fill="#e6e9f2"/></svg>
<div style="left:695px;top:95px;width:40px;height:40px;border:1px solid #14171f;border-radius:3px;background:linear-gradient(#4c5c7f,#3a4763 49%,#2c303b 50%,#30343f);box-shadow:inset 0 0 0 1px rgba(110,130,170,.42);"></div>
<div style="left:721px;top:96px;width:12px;height:12px;border:1px solid #8592b0;background:rgba(70,84,116,.55);"></div>
<svg style="left:723px;top:98px" width="8" height="8" viewBox="0 0 8 8"><path d="M1.500 6V1.500H6" stroke="#e6e9f2" stroke-width="1.200" fill="none"/><path d="M3.500 3.500L7 7" stroke="#e6e9f2" stroke-width="1.200"/><path d="M7.500 3.500v4h-4z" fill="#e6e9f2"/></svg>
<div style="left:739px;top:95px;width:40px;height:40px;border:1px solid #14171f;border-radius:3px;background:linear-gradient(#4c5c7f,#3a4763 49%,#2c303b 50%,#30343f);box-shadow:inset 0 0 0 1px rgba(110,130,170,.42);"></div>
<div style="left:783px;top:95px;width:40px;height:40px;border:1px solid #14171f;border-radius:3px;background:linear-gradient(#4c5c7f,#3a4763 49%,#2c303b 50%,#30343f);box-shadow:inset 0 0 0 1px rgba(110,130,170,.42);"></div>
<div style="left:809px;top:96px;width:12px;height:12px;border:1px solid #8592b0;background:rgba(70,84,116,.55);"></div>
<svg style="left:811px;top:98px" width="8" height="8" viewBox="0 0 8 8"><path d="M1.500 6V1.500H6" stroke="#e6e9f2" stroke-width="1.200" fill="none"/><path d="M3.500 3.500L7 7" stroke="#e6e9f2" stroke-width="1.200"/><path d="M7.500 3.500v4h-4z" fill="#e6e9f2"/></svg>
<svg style="left:478px;top:98px" width="34" height="34" viewBox="0 0 34 34"><path d="M4 12c0-5 3-7 8-7h14c4 0 6 2 6 5l-4 20H8c-3 0-4-2-4-5z" fill="#8ec2f6" stroke="#2a5aa0" stroke-width=".6"/><path d="M4 12c4-2 8-1 9 3l1 15H8c-3 0-4-2-4-5z" fill="#e8f3ff"/><path d="M13 15c4-3 14-5 19-5l-4 20H14z" fill="#4e98ec"/></svg>
<svg style="left:521px;top:98px" width="36" height="34" viewBox="0 0 36 34"><path d="M8 10l10-6 12 4-1 14-12 8-10-8z" fill="#5aa0ee" stroke="#1a4a9a" stroke-width=".6"/><path d="M8 10l10-6 12 4-12 5z" fill="#b5d9fb"/><path d="M18 13l12-5-1 14-12 8z" fill="#2e78dc"/><path d="M2 26c4-6 12-9 17-6l-3 8c-4 3-10 3-14-2z" fill="#e6c07a" stroke="#8a6420" stroke-width=".7"/><path d="M4 27l-1 5M7 28l0 5M10 29l1 5M13 28l2 5M16 27l3 4" stroke="#c8963c" stroke-width="1.300"/><path d="M17 21l12-13 2 2-11 14z" fill="#d89a4a" stroke="#7a4a12" stroke-width=".6"/><circle cx="12" cy="8" r="1.200" fill="#e81818"/><circle cx="28" cy="14" r="1.200" fill="#e81818"/><circle cx="24" cy="26" r="1.200" fill="#e81818"/></svg>
<svg style="left:565px;top:98px" width="36" height="36" viewBox="0 0 36 36"><path d="M12 8l10-3 10 3-1 20-12 4-9-5z" fill="#3a8ae6" stroke="#1a4a9a" stroke-width=".6"/><path d="M12 8l10-3 10 3-9 4z" fill="#b5d9fb"/><path d="M18 20l13-4v12l-12 4z" fill="#63aaf0"/><path d="M12 8l10 4M23 12v20M10 19l13 3 8-4" stroke="#d9ecff" stroke-width=".7" fill="none"/><path d="M3 14l8-8 2 4 7-1-2 10 6 4-11 7-2-6-8-1z" fill="#e83a2a" stroke="#7a0a0a" stroke-width=".6"/><path d="M7 17l5 11" stroke="#fff" stroke-width="1" opacity=".5"/><circle cx="13" cy="9" r="1.200" fill="#f8d0d0"/><circle cx="26" cy="14" r="1.200" fill="#e81818"/><circle cx="21" cy="26" r="1.200" fill="#e81818"/></svg>
<svg style="left:609px;top:98px" width="36" height="36" viewBox="0 0 36 36"><path d="M3 8l9-3 2 9-9 3z" fill="#a9d4fb" stroke="#2a5aa0" stroke-width=".5"/><path d="M14 6l9-2 1 9-9 2z" fill="#8ec2f6" stroke="#2a5aa0" stroke-width=".5"/><path d="M4 19l9-3 2 10-9 3z" fill="#5aa0ee" stroke="#1a4a9a" stroke-width=".5"/><path d="M15 16l9-2 8 10-10 7-6-5z" fill="#e02020" stroke="#6a0a0a" stroke-width=".6"/><path d="M24 14l8 10" stroke="#fff" stroke-width=".8" opacity=".5"/><path d="M22 28l10 6-1-8z" fill="#2a5cf0" stroke="#0a2a9a" stroke-width=".6"/><path d="M3 5l-2 26" stroke="#2a5cf0" stroke-width="1"/></svg>
<svg style="left:653px;top:98px" width="36" height="36" viewBox="0 0 36 36"><path d="M6 20l16-5 10 4v8l-15 7-11-6z" fill="#4e98ec" stroke="#1a4a9a" stroke-width=".6"/><path d="M6 20l16-5 10 4-15 6z" fill="#b5d9fb"/><path d="M17 25l15-6v8l-15 7z" fill="#2e78dc"/><path d="M14 17.500l11 5M11 30v-7.500M24 22v9" stroke="#d9ecff" stroke-width=".7"/><path d="M6 18l8-3v5l-8 3z" fill="#e84a4a" stroke="#7a0a0a" stroke-width=".5"/><path d="M6 16c2-2 6-2 8-1l0 2-8 2z" fill="#f08a8a"/><path d="M10 1l6 9h-4v7H8v-7H4z" fill="#2a5cf0" stroke="#0a2a9a" stroke-width=".7"/></svg>
<svg style="left:697px;top:98px" width="36" height="36" viewBox="0 0 36 36"><path d="M4 8l12-3 12 2 3 20-13 6-12-4z" fill="#4e98ec" stroke="#1a4a9a" stroke-width=".6"/><path d="M4 8l12-3 1 11-12 3z" fill="#b5d9fb"/><path d="M16 5l12 2 1 9H17z" fill="#8ec2f6"/><path d="M5 19l12-3 1 17-12-4z" fill="#3a8ae6"/><path d="M5 19l12-3h12M16 5l2 28M4 26l27 1" stroke="#d9ecff" stroke-width=".7" fill="none"/><path d="M4 28l22-2" stroke="#e01818" stroke-width="1.200"/><path d="M10 26L27 5l2.500 2L13 28z" fill="#e82222" stroke="#7a0a0a" stroke-width=".6"/><path d="M24 9l3.500-4 2.500 2-3.500 4z" fill="#f4f4f4"/><path d="M10 26l-1 4 4-2z" fill="#f0d8a0"/></svg>
<svg style="left:741px;top:98px" width="36" height="36" viewBox="0 0 36 36"><path d="M4 5l13-2 14 2 2 13-2 14-14 2-13-2L2 18z" fill="#2e86e0" stroke="#1a4a9a" stroke-width=".7"/><path d="M4 5l7 6M17 3l-6 8M17 3l8 7M31 5l-6 5M33 18l-7-1M31 32l-5-7M17 34l-1-8M17 34l9-9M4 32l6-7M2 18l8 0M4 5l13 -2M11 11l-1 14M25 10l1 15M10 25l6 1 10-1M11 11l14-1M2 18l9-7M2 18l8 7M33 18l-8-8M33 18l-7 7M16 26L4 32M16 26l15 6" stroke="#8fd0ff" stroke-width=".7" fill="none"/><path d="M11 11l14-1 1 15-16 0z" fill="#e83636" stroke="#ff9a9a" stroke-width=".7"/><path d="M25 10L10 25" stroke="#a01818" stroke-width=".8"/></svg>
<svg style="left:785px;top:98px" width="36" height="36" viewBox="0 0 36 36"><path d="M3 4l14-1 14 2v28l-15 1-13-2z" fill="#4a9cec" stroke="#1a4a9a" stroke-width=".6"/><path d="M3 4l6 1-1 20-5 1zM9 5l9-2 3 5-2 14-11 3z" fill="#7cc0f8"/><path d="M9 5l12 3-2 14-11 3z" fill="#2a7ada"/><path d="M21 8l10-3v14l-12 3z" fill="#8ecaf8"/><path d="M8 25l11-3 12-3v14l-15 1-13-2z" fill="#3a8ae6"/><path d="M8 25l1 8M19 22l1 11M9 5l-1 20 11-3 2-14zM19 22l12-3M21 8l10-3" stroke="#c8e6ff" stroke-width=".7" fill="none"/><path d="M9 5l3 4M21 8l-2 5M19 22l-4 2M8 25l2-4" stroke="#c020d0" stroke-width="1.800"/><circle cx="9" cy="5" r="1.300" fill="#e81818"/><circle cx="21" cy="8" r="1.300" fill="#e81818"/><circle cx="19" cy="22" r="1.300" fill="#e81818"/><circle cx="8" cy="25" r="1.300" fill="#e81818"/></svg>
<div style="left:1539px;top:53px;width:78px;height:17px;background:linear-gradient(#4a5a7c,#3c4966);border-left:1px solid #55668c;border-bottom:1px solid #5a6b90;"></div>
<div class="t" style="left:1543px;top:54px;line-height:14px;color:#ececec;font-size:12px">:Right button</div>
<div style="left:0px;top:154px;width:1618px;height:730px;background:#222224;"></div>
<div style="left:2px;top:156px;width:795px;height:20px;background:linear-gradient(#4d6797,#3f5789 35%,#2c3d64 60%,#1f2a44 90%,#1a2236);border-top:1px solid #55709f;border-left:1px solid #2b3a5c;"></div>
<div style="left:4px;top:158px;width:35px;height:16px;background:linear-gradient(#50689a,#34487a 50%,#222e4c);border:1px solid #8fa2c8;border-right-color:#5a6d98;border-bottom-color:#5a6d98;box-shadow:1px 1px 0 #141a2a;"></div>
<div style="left:4px;top:158px;width:35px;height:16px;line-height:15px;text-align:center;font-weight:bold;font-size:12px;color:#fff;text-shadow:0 0 2px #000,1px 1px 0 #000">Front</div>
<div style="left:42px;top:157px;width:3px;height:18px;background:#1a2236;border-right:1px solid #4a5f8e;"></div>
<svg style="left:52px;top:161px" width="7" height="10" viewBox="0 0 7 10"><path d="M6 0.500v9L0.500 5z" fill="#f0f0f0"/></svg>
<div class="t" style="left:66px;top:159px;line-height:14px;font-size:11px;color:#e4e6ec">Tripod</div>
<div class="t" style="left:106px;top:159px;line-height:14px;font-size:11px;color:#e4e6ec">Image</div>
<div class="t" style="left:146px;top:159px;line-height:14px;font-size:11px;color:#e4e6ec">Color</div>
<div class="t" style="left:181px;top:159px;line-height:14px;font-size:11px;color:#e4e6ec">Grid</div>
<div class="t" style="left:210px;top:159px;line-height:14px;font-size:11px;color:#e4e6ec">Pivot</div>
<div style="left:529px;top:159px;width:100px;height:15px;background:linear-gradient(#4f6a9b,#3c5384 48%,#1b2132 52%,#20283b);border:1px solid #10141f;border-radius:2px;box-shadow:inset 0 0 0 1px rgba(120,145,195,.35);"></div>
<svg style="left:537px;top:160px" width="12" height="13" viewBox="0 0 12 13"><rect x="1" y="1" width="10" height="10" fill="none" stroke="#dfe6f2" stroke-width="1"/><path d="M1 11L11 1" stroke="#e8eef8" stroke-width="1.200"/></svg>
<svg style="left:552px;top:160px" width="14" height="13" viewBox="0 0 14 13"><path d="M3 2h9l-2 4H1z" fill="#b040d0" stroke="#501a66" stroke-width=".6"/><path d="M1 6h9v5H1z" fill="#2a2a34" stroke="#c8a0e0" stroke-width=".8"/><path d="M10 6l2-4v5l-2 4z" fill="#6a3a86"/></svg>
<svg style="left:569px;top:160px" width="13" height="13" viewBox="0 0 13 13"><path d="M2 11L11 2" stroke="#d040e0" stroke-width="2.200" stroke-linecap="round"/><circle cx="2.500" cy="10.500" r="1.600" fill="#fff" stroke="#a020b0" stroke-width=".8"/><circle cx="10.500" cy="2.500" r="1.300" fill="#f0a0f8"/></svg>
<svg style="left:584px;top:160px" width="14" height="13" viewBox="0 0 14 13"><path d="M3 1h10l-2 3H1z" fill="#f06a20"/><path d="M1 4h10l-1 3H1z" fill="#e8d020"/><path d="M1 7h9v2H1z" fill="#30b040"/><path d="M1 9h9v3H1z" fill="#2a50c0"/><path d="M11 4l2-3v5l-2 6z" fill="#507090"/></svg>
<svg style="left:601px;top:160px" width="14" height="13" viewBox="0 0 14 13"><path d="M5 1h5l3 8-7 3-5-3z" fill="#4aa0ee" stroke="#1a4a9a" stroke-width=".6"/><path d="M5 1h5l-1 4H4z" fill="#e84040"/><path d="M4 5h5l-3 7-5-3z" fill="#a9d4fb"/></svg>
<svg style="left:618px;top:165px" width="7" height="5" viewBox="0 0 7 5"><path d="M0 0h7L3.500 4z" fill="#eaeaea"/></svg>
<div style="left:633px;top:159px;width:54px;height:15px;background:linear-gradient(#4f6a9b,#3c5384 48%,#1b2132 52%,#20283b);border:1px solid #10141f;border-radius:2px;box-shadow:inset 0 0 0 1px rgba(120,145,195,.35);"></div>
<svg style="left:637px;top:160px" width="14" height="14" viewBox="0 0 14 14"><circle cx="5.500" cy="5.500" r="4.200" fill="#e8f2ff" stroke="#9aa8c0" stroke-width="1.200"/><path d="M8.500 8.500l4 4" stroke="#b06a30" stroke-width="2.200" stroke-linecap="round"/></svg>
<div class="t" style="left:654px;top:160px;line-height:14px;font-size:11px;color:#eceef4;letter-spacing:.3px">Zoom</div>
<div style="left:688px;top:159px;width:43px;height:15px;background:linear-gradient(#4f6a9b,#3c5384 48%,#1b2132 52%,#20283b);border:1px solid #10141f;border-radius:2px;box-shadow:inset 0 0 0 1px rgba(120,145,195,.35);"></div>
<svg style="left:691px;top:160px" width="14" height="14" viewBox="0 0 14 14"><path d="M3 7V3.500c0-1 1.500-1 1.500 0V2.500c0-1 1.500-1 1.500 0V2c0-1 1.500-1 1.500 0v1c0-1 1.500-1 1.500 0V8l1.500-2c.8-.8 1.800 0 1.200 1L10 11.500c-.5 1-1.500 1.500-3 1.500H6c-2 0-3-2-3-4z" fill="#f2f7ff" stroke="#6a8ac0" stroke-width=".7"/></svg>
<div class="t" style="left:710px;top:160px;line-height:14px;font-size:11px;color:#eceef4;letter-spacing:.2px">Pan</div>
<div style="left:732px;top:159px;width:38px;height:15px;background:linear-gradient(#4f6a9b,#3c5384 48%,#1b2132 52%,#20283b);border:1px solid #10141f;border-radius:2px;box-shadow:inset 0 0 0 1px rgba(120,145,195,.35);"></div>
<svg style="left:734px;top:160px" width="14" height="14" viewBox="0 0 14 14"><path d="M1 4V1h3M9 1h3v3M1 9v3h3" stroke="#10141c" stroke-width="1.400" fill="none"/><rect x="5" y="5" width="8" height="8" fill="#a8e098" stroke="#5a9a4a" stroke-width=".6"/><circle cx="4" cy="4.500" r="2.600" fill="#a02838"/></svg>
<div class="t" style="left:754px;top:160px;line-height:14px;font-size:11px;color:#eceef4;letter-spacing:.2px">Fit</div>
<div style="left:774px;top:159px;width:19px;height:15px;background:linear-gradient(#4f6a9b,#3c5384 48%,#1b2132 52%,#20283b);border:1px solid #10141f;border-radius:2px;box-shadow:inset 0 0 0 1px rgba(120,145,195,.35);"></div>
<svg style="left:778px;top:162px" width="11" height="9" viewBox="0 0 11 9"><rect x="1" y="1" width="9" height="7" fill="none" stroke="#fff" stroke-width="1.400"/><path d="M1 1.500h9" stroke="#fff" stroke-width="2"/></svg>
<svg style="left:2px;top:176px;background:#cbcbcb" width="795" height="329" viewBox="2 176 795 329" shape-rendering="crispEdges"><path d="M10.5 176v329M20.5 176v329M30.5 176v329M40.5 176v329M50.5 176v329M60.5 176v329M70.5 176v329M80.5 176v329M90.5 176v329M110.5 176v329M120.5 176v329M130.5 176v329M140.5 176v329M150.5 176v329M160.5 176v329M170.5 176v329M180.5 176v329M190.5 176v329M210.5 176v329M220.5 176v329M230.5 176v329M240.5 176v329M250.5 176v329M260.5 176v329M270.5 176v329M280.5 176v329M290.5 176v329M310.5 176v329M320.5 176v329M330.5 176v329M340.5 176v329M350.5 176v329M360.5 176v329M370.5 176v329M380.5 176v329M390.5 176v329M410.5 176v329M420.5 176v329M430.5 176v329M440.5 176v329M450.5 176v329M460.5 176v329M470.5 176v329M480.5 176v329M490.5 176v329M510.5 176v329M520.5 176v329M530.5 176v329M540.5 176v329M550.5 176v329M560.5 176v329M570.5 176v329M580.5 176v329M590.5 176v329M610.5 176v329M620.5 176v329M630.5 176v329M640.5 176v329M650.5 176v329M660.5 176v329M670.5 176v329M680.5 176v329M690.5 176v329M710.5 176v329M720.5 176v329M730.5 176v329M740.5 176v329M750.5 176v329M760.5 176v329M770.5 176v329M780.5 176v329M790.5 176v329M2 181.5h795M2 191.5h795M2 201.5h795M2 211.5h795M2 221.5h795M2 231.5h795M2 251.5h795M2 261.5h795M2 271.5h795M2 281.5h795M2 291.5h795M2 301.5h795M2 311.5h795M2 321.5h795M2 331.5h795M2 351.5h795M2 361.5h795M2 371.5h795M2 381.5h795M2 391.5h795M2 401.5h795M2 411.5h795M2 421.5h795M2 431.5h795M2 451.5h795M2 461.5h795M2 471.5h795M2 481.5h795M2 491.5h795M2 501.5h795" stroke="#c5c5c5" stroke-width="1" fill="none"/><path d="M100.5 176v329M200.5 176v329M300.5 176v329M500.5 176v329M600.5 176v329M700.5 176v329M2 241.5h795M2 441.5h795" stroke="#b0b0b0" stroke-width="1" fill="none"/><path d="M2 341.500h796M400.500 321v185" stroke="#8fa3c4" stroke-width="1"/><g stroke="#111" stroke-width="1" fill="none"><path d="M224.500 227.500h352v81h-352z"/><path d="M224.500 255l50-8M224.500 284l50 3M224.500 289l50-2M224.500 306l50-10M576.500 255l-50-8M576.500 284l-50 3M576.500 289l-50-2M576.500 306l-50-10"/></g><path d="M274.5 176v60M275.5 176v60M276.5 176v60M279.5 176v60M281.5 176v60M284.5 176v60M289.5 176v60M291.5 176v60M296.5 176v60M301.5 176v60M306.5 176v60M311.5 176v60M318.5 176v60M322.5 176v60M327.5 176v60M328.5 176v60M333.5 176v60M338.5 176v60M346.5 176v60M352.5 176v60M357.5 176v60M364.5 176v60M368.5 176v60M371.5 176v60M377.5 176v60M383.5 176v60M384.5 176v60M385.5 176v60M390.5 176v60M395.5 176v60M400.5 176v60M405.5 176v60M410.5 176v60M416.5 176v60M417.5 176v60M418.5 176v60M423.5 176v60M428.5 176v60M433.5 176v60M441.5 176v60M446.5 176v60M452.5 176v60M458.5 176v60M463.5 176v60M468.5 176v60M469.5 176v60M474.5 176v60M480.5 176v60M484.5 176v60M489.5 176v60M494.5 176v60M499.5 176v60M504.5 176v60M509.5 176v60M512.5 176v60M516.5 176v60M519.5 176v60M522.5 176v60M524.5 176v60M525.5 176v60M526.5 176v60" stroke="#0a0a0a" stroke-width="1"/><rect x="274" y="176" width="4" height="60" fill="#050505"/><rect x="522" y="176" width="4" height="60" fill="#050505"/><rect x="326" y="176" width="3" height="60" fill="#050505"/><rect x="384" y="176" width="3" height="60" fill="#050505"/><rect x="416" y="176" width="3" height="60" fill="#050505"/><rect x="468" y="176" width="3" height="60" fill="#050505"/><rect x="274" y="176" width="252" height="60" fill="#000" opacity=".14"/><rect x="345" y="176" width="110" height="60" fill="#000" opacity=".2"/><rect x="280" y="212" width="240" height="24" fill="#000" opacity=".25"/><g stroke="#111" stroke-width="1" fill="none" shape-rendering="auto"><path d="M292 212h216M292 218h216M296 205h48M456 205h48M300 212l60 22M500 212l-60 22M360 234l40-22 40 22M366 176l14 30h40l14-30M372 190h56M376 198h48M382 176l8 24M418 176l-8 24"/></g><path d="M388 190l6-5 6 5 6-5 6 5 6-5v12l-8 4h-14l-8-4z" fill="#0a0a0a" shape-rendering="auto"/><g fill="none" stroke="#0a0a0a" stroke-width="1.500" shape-rendering="auto"><path d="M272 196c-5 0-6 3-6 8v14c0 3 2 4 5 4M528 196c5 0 6 3 6 8v14c0 3-2 4-5 4"/></g><rect x="274" y="234" width="252" height="77" fill="#060606" opacity=".9"/><rect x="276" y="270" width="46" height="40" fill="#000"/><rect x="452" y="270" width="72" height="40" fill="#000"/><rect x="276" y="236" width="248" height="4" fill="#3a3a3a"/><g fill="#b4b4b4"><rect x="322" y="242" width="140" height="5"/><rect x="321" y="253" width="24" height="7"/><rect x="342" y="252" width="120" height="12" fill="#bdbdbd"/><rect x="378" y="256" width="46" height="7"/><rect x="322" y="265" width="12" height="4"/><rect x="345" y="270" width="105" height="3" fill="#9a9a9a"/><rect x="393" y="286" width="57" height="22" fill="#d0d0d0"/><rect x="350" y="288" width="30" height="3"/><rect x="350" y="293" width="30" height="3"/><rect x="350" y="298" width="30" height="3"/><rect x="350" y="303" width="22" height="3"/><rect x="322" y="288" width="12" height="2"/><rect x="322" y="296" width="10" height="2"/><rect x="322" y="303" width="8" height="2"/><rect x="460" y="288" width="10" height="2"/><rect x="478" y="290" width="18" height="2" fill="#777"/><rect x="478" y="298" width="22" height="2" fill="#777"/><rect x="280" y="270" width="30" height="2" fill="#555"/><rect x="282" y="290" width="20" height="2" fill="#555"/></g><path d="M322 244.500h140M322 256h140M345 259h118M350 289.500h30M350 294.500h30M350 299.500h30" stroke="#060606" stroke-width="1" stroke-dasharray="3 2 1 3 2 1"/><path d="M330 242v6M352 242v22M372 242v6M398 242v22M421 242v6M440 242v22M455 252v12" stroke="#060606" stroke-width="2"/><g stroke="#060606" stroke-width="1.500" shape-rendering="auto"><path d="M322 250l30 14M345 262l20-16M430 250l28 14M440 264l20-14M380 252h44M393 297l57-3M393 302l57 4"/></g><rect x="383" y="280" width="5" height="24" fill="#060606"/><rect x="388" y="300" width="4" height="2" fill="#ddd"/><path d="M310 312h180v8H310z" fill="none" stroke="#0a0a0a" stroke-width="1.500"/><path d="M310 314.500h180" stroke="#0a0a0a"/><g shape-rendering="auto"><rect x="325" y="306" width="17" height="16" rx="6" fill="#050505"/><rect x="456" y="306" width="17" height="16" rx="6" fill="#050505"/></g><g stroke="#111" stroke-width="1" fill="none" shape-rendering="auto"><path d="M280.500 310v30.500h36.500V314M280 310l36 30M521.500 310v30.500H484.500V314M521 310l-37 30"/></g><g stroke-width="1"><path d="M220 259.500h54M526 258.500h54" stroke="#d02020"/><path d="M274 259.500h46M480 258.500h46" stroke="#7a0808"/><path d="M350 254.500h50M430 257.500h60" stroke="#c01010"/><path d="M244 220.500h28M530 220.500h26" stroke="#2222d8"/><path d="M228 227.500h46M530 227.500h42" stroke="#1010a0" stroke-width="1.500"/><path d="M266 315.500h30M300 323.500h50M434 315.500h40M500 323.500h50" stroke="#e06060"/><path d="M526 398.500h49" stroke="#d84040"/><path d="M575.500 348v50" stroke="#108010"/><path d="M270.500 210v50M285.500 212v20M298.500 212v40M312.500 214v20M316.500 265v50M299.500 275v45M483.500 265v50M498.500 275v45M488.500 212v40M502.500 212v20M514.500 210v24M400.500 196v60M278.500 176v60M521.500 176v60M400.500 290v30" stroke="#0a6a0a" opacity=".85"/><path d="M414 197.500h34M486 220.500h20" stroke="#e03030"/></g><g fill="none" stroke="#1a8a1a" stroke-width="1"><rect x="267.500" y="256.500" width="5" height="5" fill="#0a3a0a"/><rect x="526.500" y="256.500" width="5" height="5" fill="#0a3a0a"/><rect x="313.500" y="312.500" width="5" height="5"/><rect x="296.500" y="321.500" width="5" height="5"/><rect x="480.500" y="312.500" width="5" height="5"/><rect x="496.500" y="321.500" width="5" height="5"/><rect x="572.500" y="395.500" width="5" height="5" stroke="#556"/><circle cx="400" cy="197" r="3" shape-rendering="auto"/></g><g shape-rendering="auto"><path d="M390 331L410 351M410 331L390 351" stroke="#c060a0" stroke-width="1"/><path d="M405 341.5h45" stroke="#e04040" stroke-width="1.200" opacity=".8"/><rect x="396" y="337" width="9" height="9" fill="#8a2a7a" stroke="#b050a0" stroke-width="1"/></g></svg>
<svg style="left:0;top:0" width="1920" height="1080" viewBox="0 0 1920 1080" pointer-events="none"><path d="M28.3 449.2L18.2 464.2L23.3 464.2L23.3 484.6L43.3 484.6L43.3 489.6L58.7 479.3L43.3 469.2L43.3 474.2L33.5 474.2L33.5 464.2L38.5 464.2z" fill="#e0d8c2" fill-opacity=".8" stroke="#d8b870" stroke-width="1"/><path d="M13.5 456.0V493.5" stroke="#109810" stroke-width="1.200"/><path d="M13.5 493.5H51.0" stroke="#f01010" stroke-width="1.200"/></svg>
<div style="left:4.0px;top:439.0px;width:20px;text-align:center;font-size:12px;font-weight:bold;color:#109810;line-height:12px">Y</div>
<div style="left:54.0px;top:489.0px;width:20px;text-align:center;font-size:12px;font-weight:bold;color:#f01010;line-height:12px">X</div>
<div style="left:3.5px;top:489.5px;width:20px;text-align:center;font-size:11.5px;color:#4a6ee8;line-height:12px">Z</div>
<div style="left:804px;top:156px;width:811px;height:20px;background:linear-gradient(#4d6797,#3f5789 35%,#2c3d64 60%,#1f2a44 90%,#1a2236);border-top:1px solid #55709f;border-left:1px solid #2b3a5c;"></div>
<div style="left:806px;top:158px;width:27px;height:16px;background:linear-gradient(#50689a,#34487a 50%,#222e4c);border:1px solid #8fa2c8;border-right-color:#5a6d98;border-bottom-color:#5a6d98;box-shadow:1px 1px 0 #141a2a;"></div>
<div style="left:806px;top:158px;width:27px;height:16px;line-height:15px;text-align:center;font-weight:bold;font-size:12px;color:#fff;text-shadow:0 0 2px #000,1px 1px 0 #000">Left</div>
<div style="left:836px;top:157px;width:3px;height:18px;background:#1a2236;border-right:1px solid #4a5f8e;"></div>
<svg style="left:846px;top:161px" width="7" height="10" viewBox="0 0 7 10"><path d="M6 0.500v9L0.500 5z" fill="#f0f0f0"/></svg>
<div class="t" style="left:860px;top:159px;line-height:14px;font-size:11px;color:#e4e6ec">Tripod</div>
<div class="t" style="left:900px;top:159px;line-height:14px;font-size:11px;color:#e4e6ec">Image</div>
<div class="t" style="left:940px;top:159px;line-height:14px;font-size:11px;color:#e4e6ec">Color</div>
<div class="t" style="left:975px;top:159px;line-height:14px;font-size:11px;color:#e4e6ec">Grid</div>
<div class="t" style="left:1004px;top:159px;line-height:14px;font-size:11px;color:#e4e6ec">Pivot</div>
<div style="left:1347px;top:159px;width:100px;height:15px;background:linear-gradient(#4f6a9b,#3c5384 48%,#1b2132 52%,#20283b);border:1px solid #10141f;border-radius:2px;box-shadow:inset 0 0 0 1px rgba(120,145,195,.35);"></div>
<svg style="left:1355px;top:160px" width="12" height="13" viewBox="0 0 12 13"><rect x="1" y="1" width="10" height="10" fill="none" stroke="#dfe6f2" stroke-width="1"/><path d="M1 11L11 1" stroke="#e8eef8" stroke-width="1.200"/></svg>
<svg style="left:1370px;top:160px" width="14" height="13" viewBox="0 0 14 13"><path d="M3 2h9l-2 4H1z" fill="#b040d0" stroke="#501a66" stroke-width=".6"/><path d="M1 6h9v5H1z" fill="#2a2a34" stroke="#c8a0e0" stroke-width=".8"/><path d="M10 6l2-4v5l-2 4z" fill="#6a3a86"/></svg>
<svg style="left:1387px;top:160px" width="13" height="13" viewBox="0 0 13 13"><path d="M2 11L11 2" stroke="#d040e0" stroke-width="2.200" stroke-linecap="round"/><circle cx="2.500" cy="10.500" r="1.600" fill="#fff" stroke="#a020b0" stroke-width=".8"/><circle cx="10.500" cy="2.500" r="1.300" fill="#f0a0f8"/></svg>
<svg style="left:1402px;top:160px" width="14" height="13" viewBox="0 0 14 13"><path d="M3 1h10l-2 3H1z" fill="#f06a20"/><path d="M1 4h10l-1 3H1z" fill="#e8d020"/><path d="M1 7h9v2H1z" fill="#30b040"/><path d="M1 9h9v3H1z" fill="#2a50c0"/><path d="M11 4l2-3v5l-2 6z" fill="#507090"/></svg>
<svg style="left:1419px;top:160px" width="14" height="13" viewBox="0 0 14 13"><path d="M5 1h5l3 8-7 3-5-3z" fill="#4aa0ee" stroke="#1a4a9a" stroke-width=".6"/><path d="M5 1h5l-1 4H4z" fill="#e84040"/><path d="M4 5h5l-3 7-5-3z" fill="#a9d4fb"/></svg>
<svg style="left:1436px;top:165px" width="7" height="5" viewBox="0 0 7 5"><path d="M0 0h7L3.500 4z" fill="#eaeaea"/></svg>
<div style="left:1451px;top:159px;width:54px;height:15px;background:linear-gradient(#4f6a9b,#3c5384 48%,#1b2132 52%,#20283b);border:1px solid #10141f;border-radius:2px;box-shadow:inset 0 0 0 1px rgba(120,145,195,.35);"></div>
<svg style="left:1455px;top:160px" width="14" height="14" viewBox="0 0 14 14"><circle cx="5.500" cy="5.500" r="4.200" fill="#e8f2ff" stroke="#9aa8c0" stroke-width="1.200"/><path d="M8.500 8.500l4 4" stroke="#b06a30" stroke-width="2.200" stroke-linecap="round"/></svg>
<div class="t" style="left:1472px;top:160px;line-height:14px;font-size:11px;color:#eceef4;letter-spacing:.3px">Zoom</div>
<div style="left:1506px;top:159px;width:43px;height:15px;background:linear-gradient(#4f6a9b,#3c5384 48%,#1b2132 52%,#20283b);border:1px solid #10141f;border-radius:2px;box-shadow:inset 0 0 0 1px rgba(120,145,195,.35);"></div>
<svg style="left:1509px;top:160px" width="14" height="14" viewBox="0 0 14 14"><path d="M3 7V3.500c0-1 1.500-1 1.500 0V2.500c0-1 1.500-1 1.500 0V2c0-1 1.500-1 1.500 0v1c0-1 1.500-1 1.500 0V8l1.500-2c.8-.8 1.800 0 1.200 1L10 11.500c-.5 1-1.500 1.500-3 1.500H6c-2 0-3-2-3-4z" fill="#f2f7ff" stroke="#6a8ac0" stroke-width=".7"/></svg>
<div class="t" style="left:1528px;top:160px;line-height:14px;font-size:11px;color:#eceef4;letter-spacing:.2px">Pan</div>
<div style="left:1550px;top:159px;width:38px;height:15px;background:linear-gradient(#4f6a9b,#3c5384 48%,#1b2132 52%,#20283b);border:1px solid #10141f;border-radius:2px;box-shadow:inset 0 0 0 1px rgba(120,145,195,.35);"></div>
<svg style="left:1552px;top:160px" width="14" height="14" viewBox="0 0 14 14"><path d="M1 4V1h3M9 1h3v3M1 9v3h3" stroke="#10141c" stroke-width="1.400" fill="none"/><rect x="5" y="5" width="8" height="8" fill="#a8e098" stroke="#5a9a4a" stroke-width=".6"/><circle cx="4" cy="4.500" r="2.600" fill="#a02838"/></svg>
<div class="t" style="left:1572px;top:160px;line-height:14px;font-size:11px;color:#eceef4;letter-spacing:.2px">Fit</div>
<div style="left:1592px;top:159px;width:19px;height:15px;background:linear-gradient(#4f6a9b,#3c5384 48%,#1b2132 52%,#20283b);border:1px solid #10141f;border-radius:2px;box-shadow:inset 0 0 0 1px rgba(120,145,195,.35);"></div>
<svg style="left:1596px;top:162px" width="11" height="9" viewBox="0 0 11 9"><rect x="1" y="1" width="9" height="7" fill="none" stroke="#fff" stroke-width="1.400"/><path d="M1 1.500h9" stroke="#fff" stroke-width="2"/></svg>
<svg style="left:804px;top:176px;background:#cbcbcb" width="811" height="329" viewBox="804 176 811 329" shape-rendering="crispEdges"><path d="M820.5 176v329M830.5 176v329M840.5 176v329M850.5 176v329M860.5 176v329M870.5 176v329M880.5 176v329M890.5 176v329M900.5 176v329M920.5 176v329M930.5 176v329M940.5 176v329M950.5 176v329M960.5 176v329M970.5 176v329M980.5 176v329M990.5 176v329M1000.5 176v329M1020.5 176v329M1030.5 176v329M1040.5 176v329M1050.5 176v329M1060.5 176v329M1070.5 176v329M1080.5 176v329M1090.5 176v329M1100.5 176v329M1120.5 176v329M1130.5 176v329M1140.5 176v329M1150.5 176v329M1160.5 176v329M1170.5 176v329M1180.5 176v329M1190.5 176v329M1200.5 176v329M1220.5 176v329M1230.5 176v329M1240.5 176v329M1250.5 176v329M1260.5 176v329M1270.5 176v329M1280.5 176v329M1290.5 176v329M1300.5 176v329M1320.5 176v329M1330.5 176v329M1340.5 176v329M1350.5 176v329M1360.5 176v329M1370.5 176v329M1380.5 176v329M1390.5 176v329M1400.5 176v329M1420.5 176v329M1430.5 176v329M1440.5 176v329M1450.5 176v329M1460.5 176v329M1470.5 176v329M1480.5 176v329M1490.5 176v329M1500.5 176v329M1520.5 176v329M1530.5 176v329M1540.5 176v329M1550.5 176v329M1560.5 176v329M1570.5 176v329M1580.5 176v329M1590.5 176v329M1600.5 176v329M804 181.5h811M804 191.5h811M804 201.5h811M804 211.5h811M804 221.5h811M804 231.5h811M804 251.5h811M804 261.5h811M804 271.5h811M804 281.5h811M804 291.5h811M804 301.5h811M804 311.5h811M804 321.5h811M804 331.5h811M804 351.5h811M804 361.5h811M804 371.5h811M804 381.5h811M804 391.5h811M804 401.5h811M804 411.5h811M804 421.5h811M804 431.5h811M804 451.5h811M804 461.5h811M804 471.5h811M804 481.5h811M804 491.5h811M804 501.5h811" stroke="#c5c5c5" stroke-width="1" fill="none"/><path d="M810.5 176v329M910.5 176v329M1010.5 176v329M1110.5 176v329M1310.5 176v329M1410.5 176v329M1510.5 176v329M1610.5 176v329M804 241.5h811M804 441.5h811" stroke="#b0b0b0" stroke-width="1" fill="none"/><path d="M804 341.500h811M1210.500 196v310" stroke="#8fa3c4" stroke-width="1"/><g shape-rendering="auto"><g stroke="#111" stroke-width="1" fill="none"><path d="M804 208L827 176M832 223L859 176M990.500 176v60M1018 176l6 49M1030 176l10 49M1044.500 176l10.500 52M1065 176l16 56M1082 176l19 54M1097 176l21 52M1438.500 176L1532 226M1532 226l22-50M1557 226l16-50M1571 226l14-50M1575 226l14-50M1587 236l13-60"/><ellipse cx="1572" cy="232" rx="22" ry="6"/><ellipse cx="1560" cy="232" rx="30" ry="4"/><path d="M1532 226v14"/></g><path d="M804 226.5H1615M804 228.5H1615M804 230H1615M804 231.5H1615M804 233H1615" stroke="#111" stroke-width=".9"/><rect x="804" y="226" width="811" height="9" fill="#000" opacity=".25"/><path d="M804 236l80 0 100 0" stroke="#000" stroke-width="0"/><rect x="804" y="235" width="811" height="7.500" fill="#000"/><path d="M804 229l200 4M804 226l120 6M1000 229c20-6 60-4 80 3M980 232c40-8 90-6 140 2M1230 226l385 4" stroke="#000" stroke-width="1" fill="none"/><rect x="826.0" y="201" width="7" height="19" rx="1.500" fill="#050505"/><rect x="827.5" y="219" width="4" height="18" fill="#0a0a0a"/><rect x="826.0" y="234" width="7" height="9" fill="#000"/><rect x="828.0" y="204" width="3" height="1.500" fill="#ddd"/><rect x="828.5" y="211" width="2" height="1" fill="#bbb"/><rect x="892.8" y="201" width="7" height="19" rx="1.500" fill="#050505"/><rect x="894.3" y="219" width="4" height="18" fill="#0a0a0a"/><rect x="892.8" y="234" width="7" height="9" fill="#000"/><rect x="894.8" y="204" width="3" height="1.500" fill="#ddd"/><rect x="895.3" y="211" width="2" height="1" fill="#bbb"/><rect x="962.0" y="201" width="7" height="19" rx="1.500" fill="#050505"/><rect x="963.5" y="219" width="4" height="18" fill="#0a0a0a"/><rect x="962.0" y="234" width="7" height="9" fill="#000"/><rect x="964.0" y="204" width="3" height="1.500" fill="#ddd"/><rect x="964.5" y="211" width="2" height="1" fill="#bbb"/><rect x="1036.5" y="201" width="7" height="19" rx="1.500" fill="#050505"/><rect x="1038" y="219" width="4" height="18" fill="#0a0a0a"/><rect x="1036.5" y="234" width="7" height="9" fill="#000"/><rect x="1038.5" y="204" width="3" height="1.500" fill="#ddd"/><rect x="1039" y="211" width="2" height="1" fill="#bbb"/><rect x="1109.5" y="201" width="7" height="19" rx="1.500" fill="#050505"/><rect x="1111" y="219" width="4" height="18" fill="#0a0a0a"/><rect x="1109.5" y="234" width="7" height="9" fill="#000"/><rect x="1111.5" y="204" width="3" height="1.500" fill="#ddd"/><rect x="1112" y="211" width="2" height="1" fill="#bbb"/><rect x="1186.2" y="201" width="7" height="19" rx="1.500" fill="#050505"/><rect x="1187.7" y="219" width="4" height="18" fill="#0a0a0a"/><rect x="1186.2" y="234" width="7" height="9" fill="#000"/><rect x="1188.2" y="204" width="3" height="1.500" fill="#ddd"/><rect x="1188.7" y="211" width="2" height="1" fill="#bbb"/><rect x="1263.5" y="201" width="7" height="19" rx="1.500" fill="#050505"/><rect x="1265" y="219" width="4" height="18" fill="#0a0a0a"/><rect x="1263.5" y="234" width="7" height="9" fill="#000"/><rect x="1265.5" y="204" width="3" height="1.500" fill="#ddd"/><rect x="1266" y="211" width="2" height="1" fill="#bbb"/><rect x="1344.2" y="201" width="7" height="19" rx="1.500" fill="#050505"/><rect x="1345.7" y="219" width="4" height="18" fill="#0a0a0a"/><rect x="1344.2" y="234" width="7" height="9" fill="#000"/><rect x="1346.2" y="204" width="3" height="1.500" fill="#ddd"/><rect x="1346.7" y="211" width="2" height="1" fill="#bbb"/><rect x="1421.1" y="201" width="7" height="19" rx="1.500" fill="#050505"/><rect x="1422.6" y="219" width="4" height="18" fill="#0a0a0a"/><rect x="1421.1" y="234" width="7" height="9" fill="#000"/><rect x="1423.1" y="204" width="3" height="1.500" fill="#ddd"/><rect x="1423.6" y="211" width="2" height="1" fill="#bbb"/><rect x="1500.1" y="201" width="7" height="19" rx="1.500" fill="#050505"/><rect x="1501.6" y="219" width="4" height="18" fill="#0a0a0a"/><rect x="1500.1" y="234" width="7" height="9" fill="#000"/><rect x="1502.1" y="204" width="3" height="1.500" fill="#ddd"/><rect x="1502.6" y="211" width="2" height="1" fill="#bbb"/><rect x="1577.5" y="201" width="7" height="19" rx="1.500" fill="#050505"/><rect x="1579" y="219" width="4" height="18" fill="#0a0a0a"/><rect x="1577.5" y="234" width="7" height="9" fill="#000"/><rect x="1579.5" y="204" width="3" height="1.500" fill="#ddd"/><rect x="1580" y="211" width="2" height="1" fill="#bbb"/><path d="M906 243.500h14v4.500h-14zM907 244l12 4M919 244l-12 4" stroke="#111" stroke-width="1" fill="none"/><path d="M1046 243.500h14v4.500h-14zM1047 244l12 4M1059 244l-12 4" stroke="#111" stroke-width="1" fill="none"/><path d="M1198 243.500h14v4.500h-14zM1199 244l12 4M1211 244l-12 4" stroke="#111" stroke-width="1" fill="none"/><path d="M1205 243.500h14v4.500h-14zM1206 244l12 4M1218 244l-12 4" stroke="#111" stroke-width="1" fill="none"/><path d="M1229.7 243.500h14v4.500h-14zM1230.7 244l12 4M1242.7 244l-12 4" stroke="#111" stroke-width="1" fill="none"/><path d="M1339.7 243.500h14v4.500h-14zM1340.7 244l12 4M1352.7 244l-12 4" stroke="#111" stroke-width="1" fill="none"/><path d="M1479.5 243.500h14v4.500h-14zM1480.5 244l12 4M1492.5 244l-12 4" stroke="#111" stroke-width="1" fill="none"/><path d="M1526.5 243.500h14v4.500h-14zM1527.5 244l12 4M1539.5 244l-12 4" stroke="#111" stroke-width="1" fill="none"/><path d="M1602 243.500h14v4.500h-14zM1603 244l12 4M1615 244l-12 4" stroke="#111" stroke-width="1" fill="none"/><g stroke="#111" stroke-width="1" fill="none"><path d="M804 250.500L885 270.500M804 252.500L883 271" stroke-width="1.500"/><path d="M804 250l80 6M842.500 242v17M885.500 242v28M847 243l38 24M843 258l42-16M900.500 242v28" /><path d="M899 243v27" stroke="#777" stroke-width="2"/><path d="M885 256l49 49.500H1276l6-8"/><path d="M885 270.500H960"/><path d="M960 267L1614 248"/><path d="M1006 270l270 10M1006 293.500l270 10M1006 262l204-5"/><path d="M973 281.500H1270M973 293.500H1216M960 304H1270M1218 272.500h52v8.500h-52M1218 293.500h52v10.500h-52"/><path d="M999.500 256.500h7v47h-7zM1001 262l4 38M1005 262l-4 38M1212.500 256.500h6v47h-6zM1213 262l4 38"/><path d="M1291 285.500H1615"/></g><path d="M960 270.500H1615" stroke="#000" stroke-width="2.500"/><rect x="960" y="272" width="13" height="32" fill="#0a0a0a"/><path d="M969 274l3 28M971 274l-3 28" stroke="#aaa" stroke-width=".7"/><circle cx="910" cy="258" r="2.200" fill="#000"/><circle cx="953" cy="268.700" r="3.200" fill="#000"/><circle cx="910" cy="285.300" r="2.200" fill="#000"/><path d="M1244 263l4-4 4 4zM1244 270.500l4-4 4 4z" fill="#000"/><path d="M1285 309c2-22 6-36 14-48 8-11 20-16 42-17" stroke="#000" stroke-width="5.500" fill="none"/><path d="M1281 308h9" stroke="#000" stroke-width="3"/><g transform="translate(0 0)"><path d="M1312.500 272.500h20.500l-3 12-21 22zM1313 273l8 30M1316 273l14 10M1310 304l20-22M1309 306.500h48M1312 302h40" stroke="#111" stroke-width="1" fill="none"/><path d="M1322 284l10-10 3 4-8 8z" fill="#000"/><path d="M1323 282l29 33" stroke="#000" stroke-width="4.500"/><rect x="1344.500" y="296" width="4" height="26" rx="1.500" fill="#000"/><rect x="1355.500" y="296" width="4" height="26" rx="1.500" fill="#000"/><rect x="1345" y="308" width="14" height="13" fill="#0a0a0a"/><rect x="1349" y="311" width="6" height="6" fill="none" stroke="#22a022" stroke-width="1"/><path d="M1360 303c6 0 5 6 8 9s5 4 10 4" stroke="#000" stroke-width="2.500" fill="none"/><path d="M1370 317l22-3" stroke="#111" stroke-width="1"/><path d="M1377.500 272.500h21.500l-2 42-17 2z" fill="none" stroke="#111" stroke-width="1"/><path d="M1378.5 273L1379.3 315M1380.5 273L1381.1499999999999 315M1382.5 273L1383.0 315M1384.5 273L1384.85 315M1386.5 273L1386.7 315M1388.5 273L1388.55 315M1390.5 273L1390.3999999999999 315M1392.5 273L1392.25 315M1394.5 273L1394.1 315M1396.5 273L1395.95 315M1398.5 273L1397.8 315M1378 275h20M1378 278h20M1378 281h20M1378 284h20M1378 287h20M1378 290h20M1378 293h20M1378 296h20M1378 299h20M1378 302h20M1378 305h20M1378 308h20M1378 311h20M1378 314h20" stroke="#111" stroke-width=".9" fill="none"/><path d="M1301.800 315h42" stroke="#7a70e0" stroke-width="1.300"/><path d="M1352 265v50" stroke="#1a9a1a" stroke-width="1.200"/></g><g transform="translate(127.5 0)"><path d="M1312.500 272.500h20.500l-3 12-21 22zM1313 273l8 30M1316 273l14 10M1310 304l20-22M1309 306.500h48M1312 302h40" stroke="#111" stroke-width="1" fill="none"/><path d="M1322 284l10-10 3 4-8 8z" fill="#000"/><path d="M1323 282l29 33" stroke="#000" stroke-width="4.500"/><rect x="1344.500" y="296" width="4" height="26" rx="1.500" fill="#000"/><rect x="1355.500" y="296" width="4" height="26" rx="1.500" fill="#000"/><rect x="1345" y="308" width="14" height="13" fill="#0a0a0a"/><rect x="1349" y="311" width="6" height="6" fill="none" stroke="#22a022" stroke-width="1"/><path d="M1360 303c6 0 5 6 8 9s5 4 10 4" stroke="#000" stroke-width="2.500" fill="none"/><path d="M1370 317l22-3" stroke="#111" stroke-width="1"/><path d="M1377.500 272.500h21.500l-2 42-17 2z" fill="none" stroke="#111" stroke-width="1"/><path d="M1378.5 273L1379.3 315M1380.5 273L1381.1499999999999 315M1382.5 273L1383.0 315M1384.5 273L1384.85 315M1386.5 273L1386.7 315M1388.5 273L1388.55 315M1390.5 273L1390.3999999999999 315M1392.5 273L1392.25 315M1394.5 273L1394.1 315M1396.5 273L1395.95 315M1398.5 273L1397.8 315M1378 275h20M1378 278h20M1378 281h20M1378 284h20M1378 287h20M1378 290h20M1378 293h20M1378 296h20M1378 299h20M1378 302h20M1378 305h20M1378 308h20M1378 311h20M1378 314h20" stroke="#111" stroke-width=".9" fill="none"/><path d="M1301.800 315h42" stroke="#7a70e0" stroke-width="1.300"/><path d="M1352 265v50" stroke="#1a9a1a" stroke-width="1.200"/></g><g transform="translate(254 0)"><path d="M1312.500 272.500h20.500l-3 12-21 22zM1313 273l8 30M1316 273l14 10M1310 304l20-22M1309 306.500h48M1312 302h40" stroke="#111" stroke-width="1" fill="none"/><path d="M1322 284l10-10 3 4-8 8z" fill="#000"/><path d="M1323 282l29 33" stroke="#000" stroke-width="4.500"/><rect x="1344.500" y="296" width="4" height="26" rx="1.500" fill="#000"/><rect x="1355.500" y="296" width="4" height="26" rx="1.500" fill="#000"/><rect x="1345" y="308" width="14" height="13" fill="#0a0a0a"/><rect x="1349" y="311" width="6" height="6" fill="none" stroke="#22a022" stroke-width="1"/><path d="M1360 303c6 0 5 6 8 9s5 4 10 4" stroke="#000" stroke-width="2.500" fill="none"/><path d="M1370 317l22-3" stroke="#111" stroke-width="1"/><path d="M1377.500 272.500h21.500l-2 42-17 2z" fill="none" stroke="#111" stroke-width="1"/><path d="M1378.5 273L1379.3 315M1380.5 273L1381.1499999999999 315M1382.5 273L1383.0 315M1384.5 273L1384.85 315M1386.5 273L1386.7 315M1388.5 273L1388.55 315M1390.5 273L1390.3999999999999 315M1392.5 273L1392.25 315M1394.5 273L1394.1 315M1396.5 273L1395.95 315M1398.5 273L1397.8 315M1378 275h20M1378 278h20M1378 281h20M1378 284h20M1378 287h20M1378 290h20M1378 293h20M1378 296h20M1378 299h20M1378 302h20M1378 305h20M1378 308h20M1378 311h20M1378 314h20" stroke="#111" stroke-width=".9" fill="none"/><path d="M1301.800 315h42" stroke="#7a70e0" stroke-width="1.300"/><path d="M1352 265v50" stroke="#1a9a1a" stroke-width="1.200"/></g></g><path d="M808 227.500h22M1338 227.500h100M1040 227.500h30M1113 228.500h8" stroke="#c01818" stroke-width="1" opacity=".8"/><path d="M1088.500 178v48M1388.500 178v48M1211 197.500h47" stroke="#2a8a2a" stroke-width="1"/><g fill="none" stroke="#5a9a5a" stroke-width="1"><rect x="1086.500" y="224.500" width="5" height="5"/><rect x="1386.500" y="224.500" width="5" height="5"/><rect x="1205.500" y="195.500" width="5" height="5" stroke="#7a8a7a"/></g><path d="M1210.500 200v141" stroke="#7a9aa0" stroke-width="1"/><g shape-rendering="auto"><path d="M1200 331L1220 351M1220 331L1200 351" stroke="#c060a0" stroke-width="1"/><path d="M1215 341.5h45" stroke="#9a60e0" stroke-width="1.200" opacity=".8"/><rect x="1206" y="337" width="9" height="9" fill="#8a2a7a" stroke="#b050a0" stroke-width="1"/></g></svg>
<svg style="left:0;top:0" width="1920" height="1080" viewBox="0 0 1920 1080" pointer-events="none"><path d="M830.3 449.2L820.2 464.2L825.3 464.2L825.3 484.6L845.3 484.6L845.3 489.6L860.7 479.3L845.3 469.2L845.3 474.2L835.5 474.2L835.5 464.2L840.5 464.2z" fill="#e0d8c2" fill-opacity=".8" stroke="#d8b870" stroke-width="1"/><path d="M815.5 456.0V493.5" stroke="#109810" stroke-width="1.200"/><path d="M815.5 493.5H853.0" stroke="#2a5cf0" stroke-width="1.200"/></svg>
<div style="left:806.0px;top:439.0px;width:20px;text-align:center;font-size:12px;font-weight:bold;color:#109810;line-height:12px">Y</div>
<div style="left:856.0px;top:489.0px;width:20px;text-align:center;font-size:12px;font-weight:bold;color:#2a5cf0;line-height:12px">Z</div>
<div style="left:805.5px;top:489.5px;width:20px;text-align:center;font-size:11.5px;color:#f01010;line-height:12px">X</div>
<div style="left:2px;top:512px;width:795px;height:20px;background:linear-gradient(#4d6797,#3f5789 35%,#2c3d64 60%,#1f2a44 90%,#1a2236);border-top:1px solid #55709f;border-left:1px solid #2b3a5c;"></div>
<div style="left:4px;top:514px;width:26px;height:16px;background:linear-gradient(#50689a,#34487a 50%,#222e4c);border:1px solid #8fa2c8;border-right-color:#5a6d98;border-bottom-color:#5a6d98;box-shadow:1px 1px 0 #141a2a;"></div>
<div style="left:4px;top:514px;width:26px;height:16px;line-height:15px;text-align:center;font-weight:bold;font-size:12px;color:#fff;text-shadow:0 0 2px #000,1px 1px 0 #000">Top</div>
<div style="left:33px;top:513px;width:3px;height:18px;background:#1a2236;border-right:1px solid #4a5f8e;"></div>
<svg style="left:43px;top:517px" width="7" height="10" viewBox="0 0 7 10"><path d="M6 0.500v9L0.500 5z" fill="#f0f0f0"/></svg>
<div class="t" style="left:57px;top:515px;line-height:14px;font-size:11px;color:#e4e6ec">Tripod</div>
<div class="t" style="left:97px;top:515px;line-height:14px;font-size:11px;color:#e4e6ec">Image</div>
<div class="t" style="left:137px;top:515px;line-height:14px;font-size:11px;color:#e4e6ec">Color</div>
<div class="t" style="left:172px;top:515px;line-height:14px;font-size:11px;color:#e4e6ec">Grid</div>
<div class="t" style="left:201px;top:515px;line-height:14px;font-size:11px;color:#e4e6ec">Pivot</div>
<div style="left:529px;top:515px;width:100px;height:15px;background:linear-gradient(#4f6a9b,#3c5384 48%,#1b2132 52%,#20283b);border:1px solid #10141f;border-radius:2px;box-shadow:inset 0 0 0 1px rgba(120,145,195,.35);"></div>
<svg style="left:537px;top:516px" width="12" height="13" viewBox="0 0 12 13"><rect x="1" y="1" width="10" height="10" fill="none" stroke="#dfe6f2" stroke-width="1"/><path d="M1 11L11 1" stroke="#e8eef8" stroke-width="1.200"/></svg>
<svg style="left:552px;top:516px" width="14" height="13" viewBox="0 0 14 13"><path d="M3 2h9l-2 4H1z" fill="#b040d0" stroke="#501a66" stroke-width=".6"/><path d="M1 6h9v5H1z" fill="#2a2a34" stroke="#c8a0e0" stroke-width=".8"/><path d="M10 6l2-4v5l-2 4z" fill="#6a3a86"/></svg>
<svg style="left:569px;top:516px" width="13" height="13" viewBox="0 0 13 13"><path d="M2 11L11 2" stroke="#d040e0" stroke-width="2.200" stroke-linecap="round"/><circle cx="2.500" cy="10.500" r="1.600" fill="#fff" stroke="#a020b0" stroke-width=".8"/><circle cx="10.500" cy="2.500" r="1.300" fill="#f0a0f8"/></svg>
<svg style="left:584px;top:516px" width="14" height="13" viewBox="0 0 14 13"><path d="M3 1h10l-2 3H1z" fill="#f06a20"/><path d="M1 4h10l-1 3H1z" fill="#e8d020"/><path d="M1 7h9v2H1z" fill="#30b040"/><path d="M1 9h9v3H1z" fill="#2a50c0"/><path d="M11 4l2-3v5l-2 6z" fill="#507090"/></svg>
<svg style="left:601px;top:516px" width="14" height="13" viewBox="0 0 14 13"><path d="M5 1h5l3 8-7 3-5-3z" fill="#4aa0ee" stroke="#1a4a9a" stroke-width=".6"/><path d="M5 1h5l-1 4H4z" fill="#e84040"/><path d="M4 5h5l-3 7-5-3z" fill="#a9d4fb"/></svg>
<svg style="left:618px;top:521px" width="7" height="5" viewBox="0 0 7 5"><path d="M0 0h7L3.500 4z" fill="#eaeaea"/></svg>
<div style="left:633px;top:515px;width:54px;height:15px;background:linear-gradient(#4f6a9b,#3c5384 48%,#1b2132 52%,#20283b);border:1px solid #10141f;border-radius:2px;box-shadow:inset 0 0 0 1px rgba(120,145,195,.35);"></div>
<svg style="left:637px;top:516px" width="14" height="14" viewBox="0 0 14 14"><circle cx="5.500" cy="5.500" r="4.200" fill="#e8f2ff" stroke="#9aa8c0" stroke-width="1.200"/><path d="M8.500 8.500l4 4" stroke="#b06a30" stroke-width="2.200" stroke-linecap="round"/></svg>
<div class="t" style="left:654px;top:516px;line-height:14px;font-size:11px;color:#eceef4;letter-spacing:.3px">Zoom</div>
<div style="left:688px;top:515px;width:43px;height:15px;background:linear-gradient(#4f6a9b,#3c5384 48%,#1b2132 52%,#20283b);border:1px solid #10141f;border-radius:2px;box-shadow:inset 0 0 0 1px rgba(120,145,195,.35);"></div>
<svg style="left:691px;top:516px" width="14" height="14" viewBox="0 0 14 14"><path d="M3 7V3.500c0-1 1.500-1 1.500 0V2.500c0-1 1.500-1 1.500 0V2c0-1 1.500-1 1.500 0v1c0-1 1.500-1 1.500 0V8l1.500-2c.8-.8 1.800 0 1.200 1L10 11.500c-.5 1-1.500 1.500-3 1.500H6c-2 0-3-2-3-4z" fill="#f2f7ff" stroke="#6a8ac0" stroke-width=".7"/></svg>
<div class="t" style="left:710px;top:516px;line-height:14px;font-size:11px;color:#eceef4;letter-spacing:.2px">Pan</div>
<div style="left:732px;top:515px;width:38px;height:15px;background:linear-gradient(#4f6a9b,#3c5384 48%,#1b2132 52%,#20283b);border:1px solid #10141f;border-radius:2px;box-shadow:inset 0 0 0 1px rgba(120,145,195,.35);"></div>
<svg style="left:734px;top:516px" width="14" height="14" viewBox="0 0 14 14"><path d="M1 4V1h3M9 1h3v3M1 9v3h3" stroke="#10141c" stroke-width="1.400" fill="none"/><rect x="5" y="5" width="8" height="8" fill="#a8e098" stroke="#5a9a4a" stroke-width=".6"/><circle cx="4" cy="4.500" r="2.600" fill="#a02838"/></svg>
<div class="t" style="left:754px;top:516px;line-height:14px;font-size:11px;color:#eceef4;letter-spacing:.2px">Fit</div>
<div style="left:774px;top:515px;width:19px;height:15px;background:linear-gradient(#4f6a9b,#3c5384 48%,#1b2132 52%,#20283b);border:1px solid #10141f;border-radius:2px;box-shadow:inset 0 0 0 1px rgba(120,145,195,.35);"></div>
<svg style="left:778px;top:518px" width="11" height="9" viewBox="0 0 11 9"><rect x="1" y="1" width="9" height="7" fill="none" stroke="#fff" stroke-width="1.400"/><path d="M1 1.500h9" stroke="#fff" stroke-width="2"/></svg>
<svg style="left:2px;top:532px;background:#cbcbcb" width="795" height="346" viewBox="2 532 795 346" shape-rendering="crispEdges"><path d="M10.5 532v346M20.5 532v346M30.5 532v346M40.5 532v346M50.5 532v346M60.5 532v346M70.5 532v346M80.5 532v346M90.5 532v346M110.5 532v346M120.5 532v346M130.5 532v346M140.5 532v346M150.5 532v346M160.5 532v346M170.5 532v346M180.5 532v346M190.5 532v346M210.5 532v346M220.5 532v346M230.5 532v346M240.5 532v346M250.5 532v346M260.5 532v346M270.5 532v346M280.5 532v346M290.5 532v346M310.5 532v346M320.5 532v346M330.5 532v346M340.5 532v346M350.5 532v346M360.5 532v346M370.5 532v346M380.5 532v346M390.5 532v346M410.5 532v346M420.5 532v346M430.5 532v346M440.5 532v346M450.5 532v346M460.5 532v346M470.5 532v346M480.5 532v346M490.5 532v346M510.5 532v346M520.5 532v346M530.5 532v346M540.5 532v346M550.5 532v346M560.5 532v346M570.5 532v346M580.5 532v346M590.5 532v346M610.5 532v346M620.5 532v346M630.5 532v346M640.5 532v346M650.5 532v346M660.5 532v346M670.5 532v346M680.5 532v346M690.5 532v346M710.5 532v346M720.5 532v346M730.5 532v346M740.5 532v346M750.5 532v346M760.5 532v346M770.5 532v346M780.5 532v346M790.5 532v346M2 535.5h795M2 545.5h795M2 555.5h795M2 565.5h795M2 575.5h795M2 585.5h795M2 595.5h795M2 615.5h795M2 625.5h795M2 635.5h795M2 645.5h795M2 655.5h795M2 665.5h795M2 675.5h795M2 685.5h795M2 695.5h795M2 715.5h795M2 725.5h795M2 735.5h795M2 745.5h795M2 755.5h795M2 765.5h795M2 775.5h795M2 785.5h795M2 795.5h795M2 815.5h795M2 825.5h795M2 835.5h795M2 845.5h795M2 855.5h795M2 865.5h795M2 875.5h795" stroke="#c5c5c5" stroke-width="1" fill="none"/><path d="M100.5 532v346M200.5 532v346M300.5 532v346M500.5 532v346M600.5 532v346M700.5 532v346M2 605.5h795M2 805.5h795" stroke="#b0b0b0" stroke-width="1" fill="none"/><path d="M2 705.500h796M400.500 532v346" stroke="#8fa3c4" stroke-width="1"/><g shape-rendering="auto"><path d="M225 532V878M575.500 532V878" stroke="#111" stroke-width="1.300"/><path d="M273.500 532V878M526.500 532V878" stroke="#000" stroke-width="3.500"/><path d="M269.5 532V878M277.5 532V878M282 532V878M286 532V878M511 532V878M516 532V878M518.7 532V878M522.7 532V878M280 532V878M284.5 532V878M513.5 532V878M520.5 532V878" stroke="#1a1a1a" stroke-width="1"/><path d="M328.3 532V878M330.7 532V878M333.7 532V878M336.7 532V878M339.6 532V878M342.2 532V878M458.4 532V878M461 532V878M463.9 532V878M466.9 532V878M469.6 532V878M471.6 532V878" stroke="#111" stroke-width="1"/><path d="M327 532V878M343.500 532V878M457 532V878M473 532V878" stroke="#666" stroke-width="1"/><path d="M332 532V878M338 532V878M462.500 532V878M468 532V878" stroke="#000" stroke-width="1.600"/><rect x="283" y="560" width="231" height="15.5" fill="#000" opacity=".22"/><g stroke="#0a0a0a" stroke-width="1.300" fill="none"><path d="M283 560H514M283 575.5H514M283 566.25H514M283 569.25H514"/><path d="M283.0 560L311.9 567.75L283.0 575.5M311.9 560L283.0 567.75L311.9 575.5M311.9 560L340.8 567.75L311.9 575.5M340.8 560L311.9 567.75L340.8 575.5M340.8 560L369.6 567.75L340.8 575.5M369.6 560L340.8 567.75L369.6 575.5M369.6 560L398.5 567.75L369.6 575.5M398.5 560L369.6 567.75L398.5 575.5M398.5 560L427.4 567.75L398.5 575.5M427.4 560L398.5 567.75L427.4 575.5M427.4 560L456.2 567.75L427.4 575.5M456.2 560L427.4 567.75L456.2 575.5M456.2 560L485.1 567.75L456.2 575.5M485.1 560L456.2 567.75L485.1 575.5M485.1 560L514.0 567.75L485.1 575.5M514.0 560L485.1 567.75L514.0 575.5" stroke-width="1"/></g><path d="M310.500 559.500h178" stroke="#000" stroke-width="1.500"/><rect x="280" y="697" width="240" height="17" fill="#000" opacity=".22"/><g stroke="#0a0a0a" stroke-width="1.300" fill="none"><path d="M280 697H520M280 714H520M280 704.0H520M280 707.0H520"/><path d="M280.0 697L310.0 705.5L280.0 714M310.0 697L280.0 705.5L310.0 714M310.0 697L340.0 705.5L310.0 714M340.0 697L310.0 705.5L340.0 714M340.0 697L370.0 705.5L340.0 714M370.0 697L340.0 705.5L370.0 714M370.0 697L400.0 705.5L370.0 714M400.0 697L370.0 705.5L400.0 714M400.0 697L430.0 705.5L400.0 714M430.0 697L400.0 705.5L430.0 714M430.0 697L460.0 705.5L430.0 714M460.0 697L430.0 705.5L460.0 714M460.0 697L490.0 705.5L460.0 714M490.0 697L460.0 705.5L490.0 714M490.0 697L520.0 705.5L490.0 714M520.0 697L490.0 705.5L520.0 714" stroke-width="1"/></g><rect x="283" y="855.5" width="231" height="14.299999999999955" fill="#000" opacity=".22"/><g stroke="#0a0a0a" stroke-width="1.300" fill="none"><path d="M283 855.5H514M283 869.8H514M283 861.15H514M283 864.15H514"/><path d="M283.0 855.5L311.9 862.65L283.0 869.8M311.9 855.5L283.0 862.65L311.9 869.8M311.9 855.5L340.8 862.65L311.9 869.8M340.8 855.5L311.9 862.65L340.8 869.8M340.8 855.5L369.6 862.65L340.8 869.8M369.6 855.5L340.8 862.65L369.6 869.8M369.6 855.5L398.5 862.65L369.6 869.8M398.5 855.5L369.6 862.65L398.5 869.8M398.5 855.5L427.4 862.65L398.5 869.8M427.4 855.5L398.5 862.65L427.4 869.8M427.4 855.5L456.2 862.65L427.4 869.8M456.2 855.5L427.4 862.65L456.2 869.8M456.2 855.5L485.1 862.65L456.2 869.8M485.1 855.5L456.2 862.65L485.1 869.8M485.1 855.5L514.0 862.65L485.1 869.8M514.0 855.5L485.1 862.65L514.0 869.8" stroke-width="1"/></g><path d="M276.3 584.500h44.500v44c0 4-3 6-6 6h-32c-4 0-6.500-3-6.500-6z" fill="#050505"/><path d="M281.3 589h3M287.8 589h3M294.3 589h3M300.8 589h3M307.3 589h3M313.8 589h3M281.3 595h3M287.8 595h3M294.3 595h3M300.8 595h3M307.3 595h3M313.8 595h3M281.3 601h3M287.8 601h3M294.3 601h3M300.8 601h3M307.3 601h3M313.8 601h3M281.3 607h3M287.8 607h3M294.3 607h3M300.8 607h3M307.3 607h3M313.8 607h3M281.3 613h3M287.8 613h3M294.3 613h3M300.8 613h3M307.3 613h3M313.8 613h3M281.3 619h3M287.8 619h3M294.3 619h3M300.8 619h3M307.3 619h3M313.8 619h3M281.3 625h3M287.8 625h3M294.3 625h3M300.8 625h3M307.3 625h3M313.8 625h3" stroke="#ccc" stroke-width="1" stroke-dasharray="1 1"/><path d="M480 584.500h44.500v44c0 4-3 6-6 6h-32c-4 0-6.500-3-6.500-6z" fill="#050505"/><path d="M485.0 589h3M491.5 589h3M498.0 589h3M504.5 589h3M511.0 589h3M517.5 589h3M485.0 595h3M491.5 595h3M498.0 595h3M504.5 595h3M511.0 595h3M517.5 595h3M485.0 601h3M491.5 601h3M498.0 601h3M504.5 601h3M511.0 601h3M517.5 601h3M485.0 607h3M491.5 607h3M498.0 607h3M504.5 607h3M511.0 607h3M517.5 607h3M485.0 613h3M491.5 613h3M498.0 613h3M504.5 613h3M511.0 613h3M517.5 613h3M485.0 619h3M491.5 619h3M498.0 619h3M504.5 619h3M511.0 619h3M517.5 619h3M485.0 625h3M491.5 625h3M498.0 625h3M504.5 625h3M511.0 625h3M517.5 625h3" stroke="#ccc" stroke-width="1" stroke-dasharray="1 1"/><path d="M329.5 532h12v8h-3v16h4v10h3l3 2v24h-6v6l3 2v8h-4v6h-8v-6h-4v-8l3-2v-8h-2v-20h3v-10h3v-16h-3z" fill="#050505"/><ellipse cx="335.5" cy="534" rx="10" ry="4" fill="none" stroke="#111"/><path d="M339.5 578h9v24h-9z" fill="#050505"/><rect x="328.3" y="664" width="14.300" height="7.400" fill="none" stroke="#111" stroke-width="1"/><circle cx="333.5" cy="667.500" r="2" fill="#000"/><path d="M458.5 532h12v8h-3v16h4v10h3l-3 2v24h-6v6l3 2v8h-4v6h-8v-6h-4v-8l3-2v-8h-2v-20h3v-10h3v-16h-3z" fill="#050505"/><ellipse cx="464.5" cy="534" rx="10" ry="4" fill="none" stroke="#111"/><path d="M451.5 578h9v24h-9z" fill="#050505"/><rect x="457.3" y="664" width="14.300" height="7.400" fill="none" stroke="#111" stroke-width="1"/><circle cx="466.5" cy="667.500" r="2" fill="#000"/><rect x="265" y="564.5" width="7" height="5" rx="2" fill="#000"/><rect x="527.500" y="564.5" width="6" height="5" rx="2" fill="#000"/><rect x="265" y="645.8" width="7" height="5" rx="2" fill="#000"/><rect x="527.500" y="645.8" width="6" height="5" rx="2" fill="#000"/><rect x="265" y="722.8" width="7" height="5" rx="2" fill="#000"/><rect x="527.500" y="722.8" width="6" height="5" rx="2" fill="#000"/><rect x="265" y="799.5" width="7" height="5" rx="2" fill="#000"/><rect x="527.500" y="799.5" width="6" height="5" rx="2" fill="#000"/><rect x="265" y="874.5" width="7" height="5" rx="2" fill="#000"/><rect x="527.500" y="874.5" width="6" height="5" rx="2" fill="#000"/><path d="M427.700 532L366.300 878" stroke="#000" stroke-width="1.800"/><path d="M225 641.500L471 878M527.600 539.800L574.700 627M225 628l46 1l49 3 255 8.800M225 628H575M225 641H575M575 627v14" stroke="#111" stroke-width="1" fill="none"/></g><path d="M266 563.500h64M434 563.500h40" stroke="#e01010" stroke-width="1.200"/><path d="M521.500 539v37M521.500 830v48" stroke="#e01010" stroke-width="1"/><path d="M278 777v34" stroke="#e01010" stroke-width="2"/><path d="M228 827.500h46M527 827.500h44" stroke="#3030e0" stroke-width="1"/><path d="M315.500 575v37M483.500 575v37" stroke="#202080" stroke-width="1"/><g fill="none" stroke="#2a9a2a" stroke-width="1"><rect x="312.500" y="560.500" width="5" height="5"/><rect x="481.500" y="560.500" width="5" height="5"/><rect x="275.500" y="824.500" width="5" height="5"/><rect x="518.500" y="824.500" width="5" height="5"/></g><path d="M400.500 655v45" stroke="#4a9a6a" stroke-width="1"/><g shape-rendering="auto"><path d="M391 696l18 18M409 696l-18 18" stroke="#c080b0" stroke-width="1"/><rect x="396" y="701" width="9" height="9" fill="#8a2a7a" stroke="#b050a0"/></g><path d="M405 705.500h45" stroke="#d01010" stroke-width="2.500"/></svg>
<svg style="left:0;top:0" width="1920" height="1080" viewBox="0 0 1920 1080" pointer-events="none"><path d="M28.3 822.2L18.2 837.2L23.3 837.2L23.3 857.6L43.3 857.6L43.3 862.6L58.7 852.3L43.3 842.2L43.3 847.2L33.5 847.2L33.5 837.2L38.5 837.2z" fill="#e0d8c2" fill-opacity=".8" stroke="#d8b870" stroke-width="1"/><path d="M13.5 829.0V866.5" stroke="#2a5cf0" stroke-width="1.200"/><path d="M13.5 866.5H51.0" stroke="#f01010" stroke-width="1.200"/></svg>
<div style="left:4.0px;top:812.0px;width:20px;text-align:center;font-size:12px;font-weight:bold;color:#2a5cf0;line-height:12px">Z</div>
<div style="left:54.0px;top:862.0px;width:20px;text-align:center;font-size:12px;font-weight:bold;color:#f01010;line-height:12px">X</div>
<div style="left:3.5px;top:862.5px;width:20px;text-align:center;font-size:11.5px;color:#109810;line-height:12px">Y</div>
<div style="left:804px;top:512px;width:811px;height:20px;background:linear-gradient(#4d6797,#3f5789 35%,#2c3d64 60%,#1f2a44 90%,#1a2236);border-top:1px solid #55709f;border-left:1px solid #2b3a5c;"></div>
<div style="left:806px;top:514px;width:21px;height:16px;background:linear-gradient(#50689a,#34487a 50%,#222e4c);border:1px solid #8fa2c8;border-right-color:#5a6d98;border-bottom-color:#5a6d98;box-shadow:1px 1px 0 #141a2a;"></div>
<div style="left:806px;top:514px;width:21px;height:16px;line-height:15px;text-align:center;font-weight:bold;font-size:12px;color:#fff;text-shadow:0 0 2px #000,1px 1px 0 #000">3D</div>
<div style="left:830px;top:513px;width:3px;height:18px;background:#1a2236;border-right:1px solid #4a5f8e;"></div>
<svg style="left:840px;top:517px" width="7" height="10" viewBox="0 0 7 10"><path d="M6 0.500v9L0.500 5z" fill="#f0f0f0"/></svg>
<div class="t" style="left:854px;top:515px;line-height:14px;font-size:11px;color:#e4e6ec">Tripod</div>
<div class="t" style="left:894px;top:515px;line-height:14px;font-size:11px;color:#e4e6ec">Image</div>
<div class="t" style="left:934px;top:515px;line-height:14px;font-size:11px;color:#e4e6ec">Color</div>
<div class="t" style="left:969px;top:515px;line-height:14px;font-size:11px;color:#e4e6ec">Grid</div>
<div class="t" style="left:998px;top:515px;line-height:14px;font-size:11px;color:#e4e6ec">Pivot</div>
<div style="left:1347px;top:515px;width:100px;height:15px;background:linear-gradient(#4f6a9b,#3c5384 48%,#1b2132 52%,#20283b);border:1px solid #10141f;border-radius:2px;box-shadow:inset 0 0 0 1px rgba(120,145,195,.35);"></div>
<svg style="left:1355px;top:516px" width="14" height="13" viewBox="0 0 14 13"><path d="M5 1h7l-3 10H1z" fill="#4a90ee" stroke="#163a8a" stroke-width=".6"/><path d="M5 1h3L4 11H1z" fill="#b5d9fb"/></svg>
<svg style="left:1372px;top:516px" width="13" height="13" viewBox="0 0 13 13"><path d="M2 11L11 2" stroke="#d040e0" stroke-width="2.200" stroke-linecap="round"/><circle cx="2.500" cy="10.500" r="1.600" fill="#fff" stroke="#a020b0" stroke-width=".8"/><circle cx="10.500" cy="2.500" r="1.300" fill="#f0a0f8"/></svg>
<svg style="left:1387px;top:516px" width="13" height="13" viewBox="0 0 13 13"><rect x="1" y="1" width="11" height="11" fill="#fff"/><path d="M1 1h3.700v3.700H1zM8.300 1H12v3.700H8.300zM4.700 4.700h3.600v3.600H4.700zM1 8.300h3.700V12H1zM8.300 8.300H12V12H8.300z" fill="#a01830"/><path d="M4.700 1h3.600v3.700H4.700z" fill="#2a3a9a"/></svg>
<svg style="left:1404px;top:516px" width="14" height="13" viewBox="0 0 14 13"><path d="M1 5l10-2 2 7-10 2z" fill="#555a66" stroke="#222" stroke-width=".6"/><path d="M1 5l10-2 .5 2-10 2z" fill="#8a8e98"/></svg>
<svg style="left:1422px;top:515px" width="10" height="14" viewBox="0 0 10 14"><path d="M5 1c3 0 4 2 4 4 0 2-2 3-2 5H3c0-2-2-3-2-5 0-2 1-4 4-4z" fill="#f8e040" stroke="#8a7a10" stroke-width=".6"/><rect x="3" y="10" width="4" height="3" fill="#a0a0a8"/></svg>
<svg style="left:1436px;top:521px" width="7" height="5" viewBox="0 0 7 5"><path d="M0 0h7L3.500 4z" fill="#eaeaea"/></svg>
<div style="left:1451px;top:515px;width:54px;height:15px;background:linear-gradient(#4f6a9b,#3c5384 48%,#1b2132 52%,#20283b);border:1px solid #10141f;border-radius:2px;box-shadow:inset 0 0 0 1px rgba(120,145,195,.35);"></div>
<svg style="left:1455px;top:516px" width="14" height="14" viewBox="0 0 14 14"><circle cx="5.500" cy="5.500" r="4.200" fill="#e8f2ff" stroke="#9aa8c0" stroke-width="1.200"/><path d="M8.500 8.500l4 4" stroke="#b06a30" stroke-width="2.200" stroke-linecap="round"/></svg>
<div class="t" style="left:1472px;top:516px;line-height:14px;font-size:11px;color:#eceef4;letter-spacing:.3px">Zoom</div>
<div style="left:1506px;top:515px;width:43px;height:15px;background:linear-gradient(#4f6a9b,#3c5384 48%,#1b2132 52%,#20283b);border:1px solid #10141f;border-radius:2px;box-shadow:inset 0 0 0 1px rgba(120,145,195,.35);"></div>
<svg style="left:1509px;top:516px" width="14" height="14" viewBox="0 0 14 14"><path d="M3 7V3.500c0-1 1.500-1 1.500 0V2.500c0-1 1.500-1 1.500 0V2c0-1 1.500-1 1.500 0v1c0-1 1.500-1 1.500 0V8l1.500-2c.8-.8 1.800 0 1.200 1L10 11.500c-.5 1-1.500 1.500-3 1.500H6c-2 0-3-2-3-4z" fill="#f2f7ff" stroke="#6a8ac0" stroke-width=".7"/></svg>
<div class="t" style="left:1528px;top:516px;line-height:14px;font-size:11px;color:#eceef4;letter-spacing:.2px">Pan</div>
<div style="left:1550px;top:515px;width:38px;height:15px;background:linear-gradient(#4f6a9b,#3c5384 48%,#1b2132 52%,#20283b);border:1px solid #10141f;border-radius:2px;box-shadow:inset 0 0 0 1px rgba(120,145,195,.35);"></div>
<svg style="left:1552px;top:516px" width="14" height="14" viewBox="0 0 14 14"><path d="M1 4V1h3M9 1h3v3M1 9v3h3" stroke="#10141c" stroke-width="1.400" fill="none"/><rect x="5" y="5" width="8" height="8" fill="#a8e098" stroke="#5a9a4a" stroke-width=".6"/><circle cx="4" cy="4.500" r="2.600" fill="#a02838"/></svg>
<div class="t" style="left:1572px;top:516px;line-height:14px;font-size:11px;color:#eceef4;letter-spacing:.2px">Fit</div>
<div style="left:1592px;top:515px;width:19px;height:15px;background:linear-gradient(#4f6a9b,#3c5384 48%,#1b2132 52%,#20283b);border:1px solid #10141f;border-radius:2px;box-shadow:inset 0 0 0 1px rgba(120,145,195,.35);"></div>
<svg style="left:1596px;top:518px" width="11" height="9" viewBox="0 0 11 9"><rect x="1" y="1" width="9" height="7" fill="none" stroke="#fff" stroke-width="1.400"/><path d="M1 1.500h9" stroke="#fff" stroke-width="2"/></svg>
<svg style="left:804px;top:532px;background:#cfcfcf" width="811" height="346" viewBox="804 532 811 346"><g shape-rendering="auto"><defs><filter id="bl" x="-20%" y="-50%" width="140%" height="200%"><feGaussianBlur stdDeviation="3"/></filter><filter id="bl2" x="-20%" y="-50%" width="140%" height="200%"><feGaussianBlur stdDeviation="5"/></filter><clipPath id="bodyc"><path d="M850 580.400L1520 591.700L1508.500 722L1397 726L1240 729L1038 730.800L864.600 732.500z"/></clipPath></defs><path d="M804 767.600L1615 747.700M1202 758L1244 878" stroke="#6e88b0" stroke-width="1" fill="none"/><path d="M1038 729l22.800 9.700H1400l4-12H1038z" fill="#1c1a15"/><path d="M1092.700 742.300l140 -1.500v16l-140 1.500zM1097 746.300l132-1.400v5.500l-132 1.400z" fill="#262219" fill-rule="evenodd"/><path d="M1111 733l2.500-2 1 21h-3zM1206 733l2.500-2 1 20h-3z" fill="#1c1a15"/><path d="M850 580.400L1520 591.700L1508.500 722L1397 726L1240 729L1038 730.800L864.600 732.500z" fill="#0c0b08"/><g clip-path="url(#bodyc)"><path d="M850 580.400L1520 591.700l-1 11L851 594z" fill="#2b2922"/><path d="M1515 603l5-11-11.500 130h-5z" fill="#2a2924"/><path d="M851 594l669 9" stroke="#1a1814" stroke-width="1"/><g filter="url(#bl2)"><path d="M1150 700c60-22 160-40 320-30l-6 38-90 16-240 6z" fill="#2a2825" opacity=".95"/><path d="M980 726c80-28 200-50 300-56l-10 18c-80 8-170 22-250 40z" fill="#2a2824" opacity=".8"/><path d="M1110 662l140-20v10l-140 22z" fill="#26241e" opacity=".8"/></g><g filter="url(#bl)"><path d="M1268 668c30-8 130 0 196 14l-4 10c-30 3-90-3-124-6-34-4-62-8-68-18z" fill="#7a7876"/><path d="M1278 726c24-14 64-24 108-24l-18 16-44 10z" fill="#5a5856"/><path d="M1241 638h12v20h-12z" fill="#6a6650"/></g><path d="M1365 603l-4 56" stroke="#2a2a27" stroke-width="2.500" opacity=".8"/><path d="M871 714.0l1 11M895.6 713.6l1 11M928 713.3l1 11M961.5 713.0l1 11M994.8 712.6l1 11M1026.9 712.2l1 11M1059 711.9l1 11M1092.5 711.5l1 11M1128 711.2l1 11M1162 710.9l1 11M1197 710.5l1 11M1231.7 710.1l1 11M1267 709.8l1 11M1300 709.5l1 11M1333 709.1l1 11M1368 708.8l1 11M1399 708.4l1 11M1428 708.0l1 11M1455 707.7l1 11M1481 707.4l1 11M1500 707.0l1 11" stroke="#6e6c66" stroke-width="1.600" opacity=".8"/></g><path d="M1240 755c1-16 6-27 18-27.500h120c10 0 14 8 18 22l2 12" stroke="#2a2822" stroke-width="4" fill="none"/><path d="M1394 748l8 2v16l-8-3z" fill="#161410"/><path d="M1248 734h18v16h-6v-8h-6v10h-6zM1290 734h22v18h-8v-10h-8v8h-6zM1330 734h22v16h-7v-8h-8v8h-7zM1370 734h12v14h-12z" fill="#14120e"/><path d="M1252 748l10 6 6 6M1300 750l12 6 8 6M1340 748l12 8 8 4" stroke="#0c0b08" stroke-width="3.500" fill="none"/><path d="M1403.500 726h27.500v22h-27.500z" fill="#1a1814"/><path d="M1434 724h14v8h-14zM1450 726l40 4v3l-40-3z" fill="#24221c"/><path d="M1470 728l26 6M1478 734l18 6" stroke="#1c1a16" stroke-width="3.500"/><rect x="1501" y="728" width="3" height="3" fill="#1a9a1a"/><rect x="1373" y="756" width="3" height="3" fill="#0a5a1a"/><circle cx="1074" cy="743" r="1" fill="#111"/><path d="M1192 748l20 20M1212 748l-20 20" stroke="#c070a8" stroke-width="1"/><rect x="1197.500" y="753.500" width="9" height="9" fill="#9a3a8a" stroke="#b860a8"/></g></svg>
<svg style="left:0;top:0" width="1920" height="1080" viewBox="0 0 1920 1080" pointer-events="none"><path d="M842.500 792.200L826.300 816.500h7.800V848.600h32.600v7.800L890.700 840.300 866.700 824.500v7.800H850.400V816.500h8.200z" fill="#e0d8c2" fill-opacity=".8" stroke="#d8b870" stroke-width="1"/><path d="M818.300 796.300V855" stroke="#109810" stroke-width="1.200"/><path d="M818.300 855L878 854.300" stroke="#9aa6f0" stroke-width="1.200"/><path d="M818.300 855l3.700 4.600" stroke="#f01010" stroke-width="1.200"/><circle cx="835.500" cy="816" r="2" fill="#b8b8a8" stroke="#a8b8a0" stroke-width=".6"/></svg>
<div style="left:809px;top:779px;width:20px;text-align:center;font-size:12px;font-weight:bold;color:#109810;line-height:12px">Y</div>
<div style="left:816px;top:859px;width:20px;text-align:center;font-size:12px;font-weight:bold;color:#f01010;line-height:12px">X</div>
<div style="left:880px;top:850px;width:20px;text-align:center;font-size:12px;color:#4a6ee8;line-height:12px">Z</div>
<div style="left:1616px;top:53px;width:5px;height:920px;background:#222224;"></div>
<div style="left:1621px;top:53px;width:299px;height:920px;background:#232325;"></div>
<div style="left:1621px;top:53px;width:299px;height:18px;background:linear-gradient(#404d6a,#333c51 45%,#27292f 90%);"></div>
<div style="left:1621px;top:53px;width:120px;height:18px;background:linear-gradient(90deg,rgba(64,78,108,.8),rgba(64,78,108,0));"></div>
<div class="t" style="left:1625px;top:56px;line-height:15px;font-size:12px;color:#f0f0f0;letter-spacing:-.3px">Scene nodes browser</div>
<div style="left:1885px;top:55px;width:15px;height:15px;background:linear-gradient(#3a4766,#222b40);border:1px solid #0d1017;border-radius:3px;box-shadow:inset 0 0 0 1px rgba(150,165,205,.5);"></div>
<div style="left:1902px;top:55px;width:15px;height:15px;background:linear-gradient(#3a4766,#222b40);border:1px solid #0d1017;border-radius:3px;box-shadow:inset 0 0 0 1px rgba(150,165,205,.5);"></div>
<svg style="left:1888px;top:57px" width="9" height="11" viewBox="0 0 9 11"><path d="M2.500 1h4v4.500h-4zM1 6h7M4.500 6v4" stroke="#fff" stroke-width="1.300" fill="none"/></svg>
<svg style="left:1905px;top:58px" width="9" height="9" viewBox="0 0 9 9"><path d="M1 1l7 7M8 1L1 8" stroke="#fff" stroke-width="1.500"/></svg>
<div style="left:1621px;top:73px;width:299px;height:21px;background:linear-gradient(#4a5c84,#3f4f70 55%,#2f394e);"></div>
<div class="tab" style="left:1627px;top:76px;width:60px;height:18px;"></div>
<div class="t" style="left:1627px;top:78px;width:60px;text-align:center;line-height:14px;color:#eee;letter-spacing:-.2px">Hierarchy</div>
<div style="left:1687px;top:73px;width:60px;height:21px;background:linear-gradient(#4a5a7a,#3a4762 60%,#354058);border:1px solid #151821;border-bottom:none;border-radius:3px 3px 0 0;box-shadow:inset 0 1px 0 rgba(140,160,200,.5);"></div>
<div class="t" style="left:1687px;top:76px;width:60px;text-align:center;line-height:14px;color:#f4f4f4;letter-spacing:-.2px">Structure</div>
<div class="tab" style="left:1747px;top:76px;width:64px;height:18px;"></div>
<div class="t" style="left:1747px;top:78px;width:64px;text-align:center;line-height:14px;color:#eee;letter-spacing:-.2px">Properties</div>
<div style="left:1627px;top:94px;width:288px;height:418px;border:1px solid #33405c;background:linear-gradient(90deg,#384560 0,#343f57 70px,#2a303e 88px,#252628 92px,#242425 100%);box-shadow:0 0 0 1px #14161c;"></div>
<div style="left:1621px;top:94px;width:6px;height:420px;background:linear-gradient(90deg,#2a3143,#38445f);"></div>
<div style="left:1629px;top:101px;width:24px;height:18px;background:linear-gradient(#4d618e,#384b74 48%,#1a2030 52%,#1e2536);border:1px solid #0c0f16;border-radius:3px;box-shadow:inset 0 0 0 1px rgba(125,148,195,.55);"></div>
<div class="t" style="left:1629px;top:103px;width:24px;text-align:center;line-height:14px;font-size:12px;color:#f4f4f4;letter-spacing:-.2px">L0</div>
<div style="left:1656px;top:101px;width:24px;height:18px;background:linear-gradient(#4d618e,#384b74 48%,#1a2030 52%,#1e2536);border:1px solid #0c0f16;border-radius:3px;box-shadow:inset 0 0 0 1px rgba(125,148,195,.55);"></div>
<div class="t" style="left:1656px;top:103px;width:24px;text-align:center;line-height:14px;font-size:12px;color:#f4f4f4;letter-spacing:-.2px">L1</div>
<div style="left:1683px;top:101px;width:24px;height:18px;background:linear-gradient(#4d618e,#384b74 48%,#1a2030 52%,#1e2536);border:1px solid #0c0f16;border-radius:3px;box-shadow:inset 0 0 0 1px rgba(125,148,195,.55);"></div>
<div class="t" style="left:1683px;top:103px;width:24px;text-align:center;line-height:14px;font-size:12px;color:#f4f4f4;letter-spacing:-.2px">L2</div>
<div style="left:1710px;top:101px;width:33px;height:18px;background:linear-gradient(#4d618e,#384b74 48%,#1a2030 52%,#1e2536);border:1px solid #0c0f16;border-radius:3px;box-shadow:inset 0 0 0 1px rgba(125,148,195,.55);"></div>
<div class="t" style="left:1710px;top:103px;width:33px;text-align:center;line-height:14px;font-size:12px;color:#f4f4f4;letter-spacing:-.2px">COL</div>
<div style="left:1746px;top:101px;width:69px;height:18px;background:linear-gradient(#4d618e,#384b74 48%,#1a2030 52%,#1e2536);border:1px solid #0c0f16;border-radius:3px;box-shadow:inset 0 0 0 1px rgba(125,148,195,.55);"></div>
<div class="t" style="left:1746px;top:103px;width:56px;text-align:center;line-height:14px;font-size:12px;color:#f4f4f4;letter-spacing:-.2px">Damage</div>
<div style="left:1802px;top:104px;width:1px;height:12px;background:#0e1118;border-right:1px solid #5a6c94;width:2px;"></div>
<svg style="left:1805px;top:108px" width="7" height="5" viewBox="0 0 7 5"><path d="M0 0h7L3.500 4z" fill="#eee"/></svg>
<div style="left:1818px;top:101px;width:42px;height:18px;background:linear-gradient(#4d618e,#384b74 48%,#1a2030 52%,#1e2536);border:1px solid #0c0f16;border-radius:3px;box-shadow:inset 0 0 0 1px rgba(125,148,195,.55);"></div>
<div class="t" style="left:1818px;top:103px;width:42px;text-align:center;line-height:14px;font-size:12px;color:#f4f4f4;letter-spacing:-.2px">Dust</div>
<div style="left:1863px;top:101px;width:33px;height:18px;background:linear-gradient(#4d618e,#384b74 48%,#1a2030 52%,#1e2536);border:1px solid #0c0f16;border-radius:3px;box-shadow:inset 0 0 0 1px rgba(125,148,195,.55);"></div>
<div class="t" style="left:1863px;top:103px;width:33px;text-align:center;line-height:14px;font-size:12px;color:#f4f4f4;letter-spacing:-.2px">Dirt</div>
<div style="left:1629px;top:122px;width:51px;height:18px;background:linear-gradient(#4d618e,#384b74 48%,#1a2030 52%,#1e2536);border:1px solid #0c0f16;border-radius:3px;box-shadow:inset 0 0 0 1px rgba(125,148,195,.55);"></div>
<div class="t" style="left:1629px;top:124px;width:51px;text-align:center;line-height:14px;font-size:12px;color:#f4f4f4;letter-spacing:-.2px">Scratch</div>
<div style="left:1632px;top:152px;width:82px;height:1px;background:linear-gradient(90deg,rgba(60,85,135,.2),#3f5a90)"></div>
<div style="left:1824px;top:152px;width:83px;height:1px;background:linear-gradient(90deg,#3f5a90,rgba(60,85,135,0))"></div>
<div class="t" style="left:1716px;top:145px;width:106px;text-align:center;line-height:15px;color:#f2f2f2;letter-spacing:-.1px">Custom scene state:</div>
<div style="left:1629px;top:164px;width:51px;height:18px;background:linear-gradient(#4d618e,#384b74 48%,#1a2030 52%,#1e2536);border:1px solid #0c0f16;border-radius:3px;box-shadow:inset 0 0 0 1px rgba(125,148,195,.55);"></div>
<div class="t" style="left:1629px;top:166px;width:51px;text-align:center;line-height:14px;font-size:12px;color:#f4f4f4;letter-spacing:-.2px">Default</div>
<div style="left:1683px;top:164px;width:42px;height:18px;background:linear-gradient(#4d618e,#384b74 48%,#1a2030 52%,#1e2536);border:1px solid #0c0f16;border-radius:3px;box-shadow:inset 0 0 0 1px rgba(125,148,195,.55);"></div>
<div class="t" style="left:1683px;top:166px;width:42px;text-align:center;line-height:14px;font-size:12px;color:#f4f4f4;letter-spacing:-.2px">Krone</div>
<div style="left:1728px;top:164px;width:69px;height:18px;background:linear-gradient(#4d618e,#384b74 48%,#1a2030 52%,#1e2536);border:1px solid #0c0f16;border-radius:3px;box-shadow:inset 0 0 0 1px rgba(125,148,195,.55);"></div>
<div class="t" style="left:1728px;top:166px;width:69px;text-align:center;line-height:14px;font-size:12px;color:#f4f4f4;letter-spacing:-.2px">Krone_dbl</div>
<div style="left:1800px;top:164px;width:78px;height:18px;background:linear-gradient(#4d618e,#384b74 48%,#1a2030 52%,#1e2536);border:1px solid #0c0f16;border-radius:3px;box-shadow:inset 0 0 0 1px rgba(125,148,195,.55);"></div>
<div class="t" style="left:1800px;top:166px;width:78px;text-align:center;line-height:14px;font-size:12px;color:#f4f4f4;letter-spacing:-.2px">Default_dbl</div>
<div style="left:1629px;top:185px;width:69px;height:18px;background:linear-gradient(#4d618e,#384b74 48%,#1a2030 52%,#1e2536);border:1px solid #0c0f16;border-radius:3px;box-shadow:inset 0 0 0 1px rgba(125,148,195,.55);"></div>
<div class="t" style="left:1629px;top:187px;width:56px;text-align:center;line-height:14px;font-size:12px;color:#f4f4f4;letter-spacing:-.2px">Default</div>
<div style="left:1685px;top:188px;width:1px;height:12px;background:#0e1118;border-right:1px solid #5a6c94;width:2px;"></div>
<svg style="left:1688px;top:192px" width="7" height="5" viewBox="0 0 7 5"><path d="M0 0h7L3.500 4z" fill="#eee"/></svg>
<div style="left:1632px;top:215px;width:78px;height:1px;background:linear-gradient(90deg,rgba(60,85,135,.2),#3f5a90)"></div>
<div style="left:1828px;top:215px;width:79px;height:1px;background:linear-gradient(90deg,#3f5a90,rgba(60,85,135,0))"></div>
<div class="t" style="left:1712px;top:208px;width:114px;text-align:center;line-height:15px;color:#f2f2f2;letter-spacing:-.1px">Custom state actions:</div>
<div style="left:1629px;top:227px;width:69px;height:18px;background:linear-gradient(#4d618e,#384b74 48%,#1a2030 52%,#1e2536);border:1px solid #0c0f16;border-radius:3px;box-shadow:inset 0 0 0 1px rgba(125,148,195,.55);"></div>
<div class="t" style="left:1629px;top:229px;width:69px;text-align:center;line-height:14px;font-size:12px;color:#f4f4f4;letter-spacing:-.2px">New State</div>
<div style="left:1701px;top:227px;width:78px;height:18px;background:linear-gradient(#3a4762,#2c3750 50%,#222a3b 50%,#262e40);border:1px solid #0c0f16;border-radius:3px;box-shadow:inset 0 0 0 1px rgba(125,148,195,.55);"></div>
<div class="t" style="left:1701px;top:229px;width:78px;text-align:center;line-height:14px;font-size:12px;color:#f4f4f4;letter-spacing:-.2px">Delete State</div>
<div style="left:1782px;top:227px;width:60px;height:18px;background:linear-gradient(#3a4762,#2c3750 50%,#222a3b 50%,#262e40);border:1px solid #0c0f16;border-radius:3px;box-shadow:inset 0 0 0 1px rgba(125,148,195,.55);"></div>
<div class="t" style="left:1782px;top:229px;width:60px;text-align:center;line-height:14px;font-size:12px;color:#f4f4f4;letter-spacing:-.2px">Edit State</div>
<div style="left:1632px;top:257px;width:67px;height:1px;background:linear-gradient(90deg,rgba(60,85,135,.2),#3f5a90)"></div>
<div style="left:1839px;top:257px;width:68px;height:1px;background:linear-gradient(90deg,#3f5a90,rgba(60,85,135,0))"></div>
<div class="t" style="left:1701px;top:250px;width:136px;text-align:center;line-height:15px;color:#f2f2f2;letter-spacing:-.1px">Selection structure states:</div>
<div style="left:1629px;top:269px;width:275px;height:18px;background:linear-gradient(rgba(100,125,180,.3),rgba(85,108,160,.18) 50%,rgba(40,48,66,.3) 50%,rgba(50,60,84,.3));border:1px solid #151922;border-radius:2px;"></div>
<div style="left:1629px;top:269px;width:18px;height:18px;background:linear-gradient(#3d4a67,#2b3448);border:1px solid #151922;border-radius:2px;box-shadow:inset 0 0 0 1px rgba(105,125,165,.4);"></div>
<svg style="left:1631px;top:271px" width="14" height="15" viewBox="0 0 14 15"><path d="M2.500 8V4.500c0-3 4.500-3 4.500 0" stroke="#b8a868" stroke-width="1.500" fill="none"/><rect x="4" y="7.500" width="9" height="7" fill="#b09a58" stroke="#6a5a28" stroke-width=".8"/><path d="M5 10h7M5 12h7" stroke="#8a7838" stroke-width=".8"/></svg>
<div style="left:1629px;top:290px;width:159px;height:39px;border:1px solid #14171f;border-radius:3px;background:linear-gradient(rgba(115,140,195,.36),rgba(95,118,170,.2) 49%,rgba(30,34,44,.35) 50%,rgba(40,46,60,.3));box-shadow:inset 0 0 0 1px rgba(110,130,170,.4);"></div>
<div style="left:1791px;top:290px;width:78px;height:39px;border:1px solid #14171f;border-radius:3px;background:linear-gradient(rgba(115,140,195,.36),rgba(95,118,170,.2) 49%,rgba(30,34,44,.35) 50%,rgba(40,46,60,.3));box-shadow:inset 0 0 0 1px rgba(110,130,170,.4);"></div>
<svg style="left:1632px;top:292px" width="34" height="36" viewBox="0 0 34 36"><path d="M2 18l14-6 15 5-14 7z" fill="#8a6a3a"/><path d="M2 18l15 6v11L4 30z" fill="#c89c5c" stroke="#7a5a2a" stroke-width=".5"/><path d="M17 24l14-7-1 12-13 6z" fill="#a87c42" stroke="#7a5a2a" stroke-width=".5"/><path d="M2 18l-2 4 15 6 2-4zM31 17l2 4-14 7-2-4z" fill="#d8b070" stroke="#7a5a2a" stroke-width=".5"/><path d="M14 20c0-8 4-12 11-12l-1-4 7 6-7 5-.5-3.500c-4 0-6 3-6 8.500z" fill="#3a9a3a" stroke="#1a5a1a" stroke-width=".7"/></svg>
<svg style="left:1794px;top:292px" width="34" height="36" viewBox="0 0 34 36"><path d="M2 18l14-6 15 5-14 7z" fill="#8a6a3a"/><path d="M2 18l15 6v11L4 30z" fill="#c89c5c" stroke="#7a5a2a" stroke-width=".5"/><path d="M17 24l14-7-1 12-13 6z" fill="#a87c42" stroke="#7a5a2a" stroke-width=".5"/><path d="M2 18l-2 4 15 6 2-4zM31 17l2 4-14 7-2-4z" fill="#d8b070" stroke="#7a5a2a" stroke-width=".5"/><path d="M12 22V11H7l9.500-10L26 11h-5v11z" fill="#3a9a3a" stroke="#1a5a1a" stroke-width=".7"/><path d="M14 12l2.500-7 3 7z" fill="#7ad07a" opacity=".6"/></svg>
<div class="t" style="left:1668px;top:302px;line-height:15px;color:#f2f2f2;letter-spacing:-.1px">Convert to Compound</div>
<div class="t" style="left:1828px;top:302px;line-height:15px;color:#f2f2f2;letter-spacing:-.5px">Dismiss</div>
<div style="left:1873px;top:290px;width:32px;height:18px;background:linear-gradient(#3a4762,#2c3750 50%,#222a3b 50%,#262e40);border:1px solid #0c0f16;border-radius:3px;box-shadow:inset 0 0 0 1px rgba(125,148,195,.55);"></div>
<div class="t" style="left:1873px;top:292px;width:32px;text-align:center;line-height:14px;font-size:12px;color:#f4f4f4;letter-spacing:-.2px">Del</div>
<div style="left:1873px;top:311px;width:32px;height:18px;background:linear-gradient(#3a4762,#2c3750 50%,#222a3b 50%,#262e40);border:1px solid #0c0f16;border-radius:3px;box-shadow:inset 0 0 0 1px rgba(125,148,195,.55);"></div>
<div class="t" style="left:1873px;top:313px;width:32px;text-align:center;line-height:14px;font-size:12px;color:#f4f4f4;letter-spacing:-.2px">Lock</div>
<div style="left:1630px;top:333px;width:281px;height:174px;background:linear-gradient(#e9e7e0 0,#e4e2db 19px,#c9c9c9 21px,#9c9c9c 100%);border-left:1px solid #f4f4f4;border-top:1px solid #f4f4f4;"></div>
<div style="left:1621px;top:514px;width:299px;height:12px;background:#202022;"></div>
<div style="left:1623px;top:518px;width:295px;height:6px;background:linear-gradient(#1a1d26,#34507f 45%,#1a1d26);border:1px solid #2d3950;border-radius:2px;"></div>
<div style="left:1622px;top:527px;width:298px;height:420px;background:linear-gradient(#e9e7e0 0,#e4e2db 19px,#c9c9c9 21px,#a3a3a3 100%);"></div>
<div style="left:1624px;top:532px;width:9px;height:9px;border:1px solid #8a8a8a;background:#f6f6f6;"></div>
<div style="left:1626px;top:536px;width:5px;height:1px;background:#222"></div><div style="left:1628px;top:534px;width:1px;height:5px;background:#222"></div>
<div style="left:1637px;top:530px;width:11px;height:11px;border:1px solid #5a6a8a;background:#fafafa;"></div>
<svg style="left:1637px;top:527px" width="13" height="14" viewBox="0 0 13 14"><path d="M3 7l2.500 4L11 1.500" stroke="#2a5ad8" stroke-width="1.800" fill="none"/></svg>
<div style="left:1652px;top:529px;font-size:11px;line-height:14px;color:#111;letter-spacing:-.35px">profiliner</div>
<div style="left:1621px;top:946px;width:299px;height:27px;background:#1f1f21;border-top:1px solid #4a5568;"></div>
<div style="left:1630px;top:948px;width:288px;height:23px;background:linear-gradient(#434345,#363638 50%,#2c2c2e);border-radius:2px;"></div>
<svg style="left:1633px;top:950px" width="16" height="17" viewBox="0 0 16 17"><path d="M3 4l7-2 5 2v8l-7 3-5-3z" fill="#4a78b8" stroke="#1c3a6a" stroke-width=".6"/><path d="M3 4l5 2 7-2M8 6v9" stroke="#a8c8f0" stroke-width=".7" fill="none"/><path d="M3 4l7-2 5 2-7 2z" fill="#8ab0e0"/><path d="M1 14h12v2H1z" fill="#b09060"/></svg>
<div class="t" style="left:1652px;top:952px;line-height:15px;color:#eee;letter-spacing:-.1px">Isolated</div>
<svg style="left:1705px;top:950px" width="13" height="17" viewBox="0 0 13 17"><rect x="0" y="0" width="13" height="17" fill="#c8ccd4"/><rect x="2" y="2" width="6" height="5" fill="#fff" stroke="#345" stroke-width=".8"/><rect x="2" y="10" width="6" height="5" fill="#fff" stroke="#345" stroke-width=".8"/><path d="M3 4l1.500 1.500L7 3M3 12l1.500 1.500L7 11" stroke="#123" stroke-width=".9" fill="none"/></svg>
<div class="t" style="left:1723px;top:952px;line-height:15px;color:#eee;letter-spacing:-.1px">Show All</div>
<svg style="left:1780px;top:951px" width="14" height="16" viewBox="0 0 14 16"><rect x="0" y="0" width="13" height="16" fill="#d8dce4"/><rect x="1.500" y="2" width="5" height="4.500" fill="#fff" stroke="#456" stroke-width=".8"/><rect x="1.500" y="9.500" width="5" height="4.500" fill="#fff" stroke="#456" stroke-width=".8"/></svg>
<svg style="left:1802px;top:951px" width="14" height="16" viewBox="0 0 14 16"><rect x="0" y="0" width="13" height="16" fill="#d8dce4"/><path d="M1 2h11M1 13h11M1 10h11" stroke="#456" stroke-width="1.200"/><path d="M6.500 2v7M3.500 6h6" stroke="#e01818" stroke-width="2"/></svg>
<svg style="left:1825px;top:951px" width="14" height="16" viewBox="0 0 14 16"><rect x="0" y="0" width="13" height="16" fill="#d8dce4"/><path d="M1 3h11M1 6h11M1 14h11" stroke="#456" stroke-width="1.200"/><path d="M6.500 7v7M3.500 10.500h6" stroke="#e01818" stroke-width="2"/></svg>
<svg style="left:1848px;top:951px" width="14" height="16" viewBox="0 0 14 16"><rect x="2" y="1" width="11" height="15" fill="#d8dce4"/><path d="M4 12h8M4 9h8" stroke="#456" stroke-width="1.200"/><path d="M1 4h8v5M1 4l3-3M1 4l3 3" stroke="#e01818" stroke-width="1.600" fill="none"/></svg>
<svg style="left:1870px;top:951px" width="14" height="16" viewBox="0 0 14 16"><rect x="3" y="3" width="11" height="13" fill="#d8dce4"/><path d="M5 7h8M7 11h6M7 14h6" stroke="#456" stroke-width="1.200"/><rect x="0.500" y="0.500" width="6" height="6" fill="#fff" stroke="#223"/><path d="M2 3.500h3M3.500 2v3" stroke="#223" stroke-width="1"/></svg>
<svg style="left:1893px;top:951px" width="14" height="16" viewBox="0 0 14 16"><rect x="3" y="3" width="11" height="13" fill="#d8dce4"/><path d="M5 7h8M7 11h6M7 14h6" stroke="#456" stroke-width="1.200"/><rect x="0.500" y="0.500" width="6" height="6" fill="#fff" stroke="#223"/><path d="M2 3.500h3" stroke="#223" stroke-width="1"/></svg>
<div style="left:0px;top:880px;width:1618px;height:4px;background:#222224;"></div>
<div style="left:0px;top:880px;width:103px;height:5px;background:linear-gradient(90deg,#38445f,#303a50 80%,#222224);"></div>
<div style="left:0px;top:884px;width:21px;height:88px;background:linear-gradient(90deg,#282d3b,#2e3546);"></div>
<div style="left:2px;top:886px;width:15px;height:15px;background:linear-gradient(#3a4766,#222b40);border:1px solid #0d1017;border-radius:3px;box-shadow:inset 0 0 0 1px rgba(150,165,205,.5);"></div>
<div style="left:2px;top:904px;width:15px;height:15px;background:linear-gradient(#3a4766,#222b40);border:1px solid #0d1017;border-radius:3px;box-shadow:inset 0 0 0 1px rgba(150,165,205,.5);"></div>
<svg style="left:5px;top:889px" width="9" height="9" viewBox="0 0 9 9"><path d="M1 1l7 7M8 1L1 8" stroke="#fff" stroke-width="1.500"/></svg>
<svg style="left:5px;top:906px" width="9" height="11" viewBox="0 0 9 11"><path d="M2.500 1h4v4.500h-4zM1 6h7M4.500 6v4" stroke="#fff" stroke-width="1.300" fill="none"/></svg>
<div style="left:-13px;top:940px;width:47px;height:15px;transform:rotate(90deg);font-size:12.5px;line-height:15px;color:#eee;overflow:hidden;text-shadow:0 1px 1px #000">Messages</div>
<div style="left:21px;top:884px;width:1594px;height:88px;background:linear-gradient(#c4c4c4 0,#c0c0c0 37px,#9e9e9e 100%);"></div>
<div style="left:21px;top:885px;width:1593px;height:18px;background:linear-gradient(#efe6cd,#ebe0c2 50%,#e2d3a6 55%,#e6d9b2);border-bottom:1px solid #b9b09a;"></div>
<div style="left:21px;top:903px;width:1592px;height:18px;background:linear-gradient(#f0dba0,#ecd088 45%,#e0b64a 55%,#e4bd58);border-bottom:1px solid #a88a3a;border-top:1px solid #f6ecd0;"></div>
<svg style="left:33px;top:886px" width="17" height="17" viewBox="0 0 17 17"><defs><radialGradient id="ig" cx=".4" cy=".3" r=".8"><stop offset="0" stop-color="#8ab8f8"/><stop offset=".6" stop-color="#2a68d8"/><stop offset="1" stop-color="#123a9a"/></radialGradient></defs><circle cx="8.500" cy="8.500" r="7.500" fill="url(#ig)" stroke="#c8d8f0" stroke-width=".8"/><rect x="7.500" y="7" width="2.200" height="6" fill="#fff"/><circle cx="8.600" cy="4.500" r="1.300" fill="#fff"/></svg>
<svg style="left:33px;top:904px" width="17" height="17" viewBox="0 0 17 17"><defs><radialGradient id="ig" cx=".4" cy=".3" r=".8"><stop offset="0" stop-color="#8ab8f8"/><stop offset=".6" stop-color="#2a68d8"/><stop offset="1" stop-color="#123a9a"/></radialGradient></defs><circle cx="8.500" cy="8.500" r="7.500" fill="url(#ig)" stroke="#c8d8f0" stroke-width=".8"/><rect x="7.500" y="7" width="2.200" height="6" fill="#fff"/><circle cx="8.600" cy="4.500" r="1.300" fill="#fff"/></svg>
<div style="left:52px;top:887px;font-size:11px;line-height:14px;color:#1a1a1a">ZModeler is ready.</div>
<div style="left:52px;top:905px;font-size:11px;line-height:14px;color:#1a1a1a">Performing autosave to "d:\zmodeler3_20130418/autosave.z3d"</div>
<div style="left:0px;top:972px;width:1920px;height:54px;background:linear-gradient(#434345,#363638 50%,#2c2c2e);border-top:1px solid #4a5060;"></div>
<div style="left:0px;top:973px;width:12px;height:53px;background:linear-gradient(90deg,#333c52,#2e3446);"></div>
<div style="left:0px;top:1026px;width:1920px;height:2px;background:#1a1a1c;"></div>
<div style="left:3px;top:976px;width:3px;height:48px;background:#2a3243;border-left:1px solid #1a1f2a;border-right:1px solid #55637f;"></div>
<div style="left:10px;top:976px;width:108px;height:48px;background:#14161c;border:1px solid #0c0e12;border-radius:2px;"></div>
<div style="left:11px;top:977px;width:17px;height:23px;background:linear-gradient(#3f4d6c,#303b55 49%,#232a3b 50%,#29324a);border:1px solid #10131a;border-radius:2px;box-shadow:inset 0 0 0 1px rgba(105,125,165,.4);"></div>
<div style="left:28px;top:977px;width:73px;height:30px;background:linear-gradient(#3f4d6c,#303b55 49%,#232a3b 50%,#29324a);border:1px solid #10131a;border-radius:2px;box-shadow:inset 0 0 0 1px rgba(105,125,165,.4);"></div>
<div class="t" style="left:28px;top:985.0px;width:73px;text-align:center;line-height:14px;font-size:12px;font-weight:bold;color:#f0f0f0">Play</div>
<div style="left:101px;top:977px;width:16px;height:23px;background:linear-gradient(#3f4d6c,#303b55 49%,#232a3b 50%,#29324a);border:1px solid #10131a;border-radius:2px;box-shadow:inset 0 0 0 1px rgba(105,125,165,.4);"></div>
<div style="left:11px;top:1001px;width:17px;height:22px;background:linear-gradient(#3f4d6c,#303b55 49%,#232a3b 50%,#29324a);border:1px solid #10131a;border-radius:2px;box-shadow:inset 0 0 0 1px rgba(105,125,165,.4);"></div>
<div style="left:28px;top:1008px;width:15px;height:15px;background:linear-gradient(#3f4d6c,#303b55 49%,#232a3b 50%,#29324a);border:1px solid #10131a;border-radius:2px;box-shadow:inset 0 0 0 1px rgba(105,125,165,.4);"></div>
<div style="left:43px;top:1008px;width:41px;height:15px;background:linear-gradient(#3f4d6c,#303b55 49%,#232a3b 50%,#29324a);border:1px solid #10131a;border-radius:2px;box-shadow:inset 0 0 0 1px rgba(105,125,165,.4);"></div>
<div class="t" style="left:43px;top:1008.5px;width:41px;text-align:center;line-height:14px;font-size:12px;font-weight:normal;color:#f0f0f0">1x</div>
<div style="left:84px;top:1008px;width:16px;height:15px;background:linear-gradient(#3f4d6c,#303b55 49%,#232a3b 50%,#29324a);border:1px solid #10131a;border-radius:2px;box-shadow:inset 0 0 0 1px rgba(105,125,165,.4);"></div>
<div style="left:101px;top:1001px;width:16px;height:22px;background:linear-gradient(#3f4d6c,#303b55 49%,#232a3b 50%,#29324a);border:1px solid #10131a;border-radius:2px;box-shadow:inset 0 0 0 1px rgba(105,125,165,.4);"></div>
<svg style="left:15px;top:983px" width="9" height="9" viewBox="0 0 9 9"><path d="M1 0v9" stroke="#fff" stroke-width="1.500"/><path d="M8 0.500v8L3 4.500z" fill="#fff"/></svg>
<svg style="left:105px;top:983px" width="9" height="9" viewBox="0 0 9 9"><path d="M8 0v9" stroke="#fff" stroke-width="1.500"/><path d="M1 0.500v8L6 4.500z" fill="#fff"/></svg>
<svg style="left:14px;top:1008px" width="10" height="8" viewBox="0 0 10 8"><path d="M5 0.500v7L0.500 4zM10 0.500v7L5.500 4z" fill="#fff"/></svg>
<svg style="left:104px;top:1008px" width="10" height="8" viewBox="0 0 10 8"><path d="M0 0.500v7L4.500 4zM5 0.500v7L9.500 4z" fill="#fff"/></svg>
<svg style="left:33px;top:1012px" width="6" height="8" viewBox="0 0 6 8"><path d="M5 0.500v7L0.500 4z" fill="#fff"/></svg>
<svg style="left:90px;top:1012px" width="6" height="8" viewBox="0 0 6 8"><path d="M1 0.500v7L5.500 4z" fill="#fff"/></svg>
<div class="t" style="left:137px;top:981px;line-height:14px;color:#d8dce6;letter-spacing:-.1px">Animation:</div>
<div style="left:194px;top:977px;width:185px;height:20px;background:#262628;border:2px solid #efecdc;box-shadow:0 0 0 1px #555;"></div>
<div style="left:361px;top:979px;width:16px;height:16px;background:linear-gradient(#f4f2e8,#dcdacd);border-left:1px solid #bbb;"></div>
<svg style="left:364px;top:984px" width="10" height="7" viewBox="0 0 10 7"><path d="M1.500 1.500L5 5l3.500-3.500" stroke="#aaa" stroke-width="1.600" fill="none"/></svg>
<div style="left:126px;top:1001px;width:93px;height:23px;background:linear-gradient(#4d618e,#384b74 48%,#1a2030 52%,#1e2536);border:1px solid #0c0f16;border-radius:3px;box-shadow:inset 0 0 0 1px rgba(125,148,195,.55);"></div>
<div style="left:223px;top:1001px;width:67px;height:23px;background:linear-gradient(#454648,#3a3b3d 49%,#2c2d2f 50%,#323335);border:1px solid #1c1c1e;border-radius:3px;box-shadow:inset 0 0 0 1px rgba(120,120,125,.3);"></div>
<div style="left:294px;top:1001px;width:86px;height:23px;background:linear-gradient(#454648,#3a3b3d 49%,#2c2d2f 50%,#323335);border:1px solid #1c1c1e;border-radius:3px;box-shadow:inset 0 0 0 1px rgba(120,120,125,.3);"></div>
<svg style="left:130px;top:1004px" width="15" height="15" viewBox="0 0 15 15"><rect x="1" y="1" width="13" height="12" fill="#e8e0d0" stroke="#5a4a2a" stroke-width="1"/><rect x="3" y="3" width="9" height="8" fill="#3a3a4a"/><path d="M6 5v4l3.500-2z" fill="#fff"/></svg>
<div class="t" style="left:151px;top:1005px;line-height:15px;color:#f2f2f2">Track Editor</div>
<svg style="left:226px;top:1004px" width="14" height="16" viewBox="0 0 14 16"><path d="M2 1v14" stroke="#3aa03a" stroke-width="2"/><path d="M8 2l1 2 2-.5-1 2 1.500 1.500-2 .5-.5 2-1.500-1.500-2 .5.500-2L4 5l2-.500z" fill="#e85a2a"/></svg>
<div class="t" style="left:247px;top:1005px;line-height:15px;color:#f2f2f2">Set Key</div>
<svg style="left:298px;top:1004px" width="14" height="16" viewBox="0 0 14 16"><path d="M2 1v14" stroke="#c03a3a" stroke-width="2"/><path d="M5 6l3 4 4-7" stroke="#4a9a4a" stroke-width="1.500" fill="none"/></svg>
<div class="t" style="left:320px;top:1005px;line-height:15px;color:#f2f2f2">Free mode</div>
<div style="left:385px;top:976px;width:2px;height:48px;background:#14161c;border-right:1px solid #3a4357;width:3px;"></div>
<div style="left:390px;top:976px;width:2px;height:48px;background:#14161c;border-right:1px solid #3a4357;width:3px;"></div>
<div style="left:395px;top:975px;width:1521px;height:32px;background:linear-gradient(#1c1c1e,#2b2b2d 20%,#2c2c2e);border:1px solid #111;border-radius:2px;"></div>
<div style="left:395px;top:1007px;width:1521px;height:18px;background:linear-gradient(#4c4c4e,#454547);border:1px solid #222;border-top:none;"></div>
<svg style="left:0;top:0" width="1920" height="1080" viewBox="0 0 1920 1080" shape-rendering="crispEdges" pointer-events="none"><path d="M396 978.500h1519" stroke="#8a8a8a" stroke-width="1"/><path d="M402.5 978v13M414.5 978v6M427.5 978v6M439.5 978v6M452.5 978v6M465.5 978v6M477.5 978v6M490.5 978v6M502.5 978v6M515.5 978v6M528.5 978v6M540.5 978v6M553.5 978v13M565.5 978v6M578.5 978v6M591.5 978v6M603.5 978v6M616.5 978v6M628.5 978v6M641.5 978v6M654.5 978v6M666.5 978v6M679.5 978v6M691.5 978v6M704.5 978v13M717.5 978v6M729.5 978v6M742.5 978v6M754.5 978v6M767.5 978v6M780.5 978v6M792.5 978v6M805.5 978v6M817.5 978v6M830.5 978v6M843.5 978v6M855.5 978v13M868.5 978v6M880.5 978v6M893.5 978v6M906.5 978v6M918.5 978v6M931.5 978v6M943.5 978v6M956.5 978v6M969.5 978v6M981.5 978v6M994.5 978v6M1006.5 978v13M1019.5 978v6M1032.5 978v6M1044.5 978v6M1057.5 978v6M1069.5 978v6M1082.5 978v6M1095.5 978v6M1107.5 978v6M1120.5 978v6M1132.5 978v6M1145.5 978v6M1158.5 978v13M1170.5 978v6M1183.5 978v6M1195.5 978v6M1208.5 978v6M1221.5 978v6M1233.5 978v6M1246.5 978v6M1258.5 978v6M1271.5 978v6M1284.5 978v6M1296.5 978v6M1309.5 978v13M1321.5 978v6M1334.5 978v6M1347.5 978v6M1359.5 978v6M1372.5 978v6M1384.5 978v6M1397.5 978v6M1410.5 978v6M1422.5 978v6M1435.5 978v6M1447.5 978v6M1460.5 978v13M1473.5 978v6M1485.5 978v6M1498.5 978v6M1510.5 978v6M1523.5 978v6M1536.5 978v6M1548.5 978v6M1561.5 978v6M1573.5 978v6M1586.5 978v6M1599.5 978v6M1611.5 978v13M1624.5 978v6M1636.5 978v6M1649.5 978v6M1662.5 978v6M1674.5 978v6M1687.5 978v6M1699.5 978v6M1712.5 978v6M1725.5 978v6M1737.5 978v6M1750.5 978v6M1762.5 978v13M1775.5 978v6M1788.5 978v6M1800.5 978v6M1813.5 978v6M1825.5 978v6M1838.5 978v6M1851.5 978v6M1863.5 978v6M1876.5 978v6M1888.5 978v6M1901.5 978v6M1914.5 978v13" stroke="#a8a8a8" stroke-width="1"/></svg>
<div style="left:403px;top:992px;font-size:11px;line-height:12px;color:#868686">0</div>
<div style="left:533px;top:992px;width:40px;text-align:center;font-size:11px;line-height:12px;color:#868686">12</div>
<div style="left:684px;top:992px;width:40px;text-align:center;font-size:11px;line-height:12px;color:#868686">24</div>
<div style="left:835px;top:992px;width:40px;text-align:center;font-size:11px;line-height:12px;color:#868686">36</div>
<div style="left:986px;top:992px;width:40px;text-align:center;font-size:11px;line-height:12px;color:#868686">48</div>
<div style="left:1138px;top:992px;width:40px;text-align:center;font-size:11px;line-height:12px;color:#868686">60</div>
<div style="left:1289px;top:992px;width:40px;text-align:center;font-size:11px;line-height:12px;color:#868686">72</div>
<div style="left:1440px;top:992px;width:40px;text-align:center;font-size:11px;line-height:12px;color:#868686">84</div>
<div style="left:1591px;top:992px;width:40px;text-align:center;font-size:11px;line-height:12px;color:#868686">96</div>
<div style="left:1742px;top:992px;width:40px;text-align:center;font-size:11px;line-height:12px;color:#868686">108</div>
<div style="left:1902px;top:992px;width:13px;overflow:hidden;font-size:11px;line-height:12px;color:#868686">120</div>
<div style="left:0px;top:1026px;width:1920px;height:20px;background:#171718;"></div>
<div style="left:0px;top:1026px;width:96px;height:20px;background:linear-gradient(90deg,#2c3448,#2a3042);"></div>
<div style="left:1526px;top:1030px;width:65px;height:15px;background:linear-gradient(#3a62b8,#2a4a9a 50%,#1c3680 50%,#2442a0);border:1px solid #0e1a40;box-shadow:inset 0 0 0 1px rgba(120,150,220,.5);"></div>
<div class="t" style="left:1526px;top:1030px;width:65px;text-align:center;font-weight:bold;font-size:11.5px;line-height:15px;color:#fff">Selected</div>
<div style="left:1597px;top:1030px;width:32px;height:15px;background:linear-gradient(#f0c860,#e0a830 50%,#c88a10 50%,#dca838);border:1px solid #5a3e08;"></div>
<div style="left:1597px;top:1030px;width:32px;text-align:center;font-weight:bold;font-size:11.5px;line-height:15px;color:#3a2a08;text-shadow:0 1px 0 rgba(255,240,190,.6)">Auto</div>
<div style="left:1634px;top:1030px;width:54px;height:15px;background:linear-gradient(#5068a0,#3a5088 50%,#2a3c70 50%,#34487e);border:1px solid #0e1a40;box-shadow:inset 0 0 0 1px rgba(130,155,215,.5);"></div>
<svg style="left:1640px;top:1033px" width="9" height="9" viewBox="0 0 9 9"><circle cx="4.500" cy="4.500" r="3.800" fill="#e01818" stroke="#5a0808" stroke-width=".8"/><circle cx="3.500" cy="3.500" r="1.200" fill="#f88"/></svg>
<div class="t" style="left:1655px;top:1030px;font-weight:bold;font-size:11.5px;line-height:15px;color:#f0f0f0">Pivot</div>
<div style="left:1693px;top:1030px;width:20px;height:15px;background:linear-gradient(#3a4660,#232a3b);border:1px solid #0e1118;"></div>
<svg style="left:1697px;top:1031px" width="13" height="13" viewBox="0 0 13 13"><circle cx="6.500" cy="6.500" r="5.800" fill="#2a5ad0" stroke="#c8d4f0" stroke-width=".8"/><path d="M3.500 6.500l2.300 2.800L9.500 4" stroke="#fff" stroke-width="1.500" fill="none"/></svg>
<div class="t" style="left:1718px;top:1030px;font-size:11px;line-height:15px;color:#f0f0f0">Cursor: 2.20000, 0.00000, 0.17000</div>
<div style="left:0px;top:1046px;width:1920px;height:34px;background:linear-gradient(#3f8cf0 0,#2f74e6 3px,#2660de 6px,#2258d8 50%,#2052cf 85%,#1b44ac);"></div>
<div style="left:0px;top:1049px;width:96px;height:31px;background:linear-gradient(#5ab45a 0,#3f9a3f 15%,#358f35 50%,#2d832d 85%,#226a22);border-radius:0 13px 13px 0;box-shadow:inset 0 2px 3px rgba(190,255,190,.55),inset -2px -2px 4px rgba(0,40,0,.5),2px 0 4px rgba(0,0,40,.5);"></div>
<svg style="left:10px;top:1055px" width="24" height="22" viewBox="0 0 24 22"><g transform="skewY(-6) translate(0 2)"><path d="M2 2c3-1.500 6-1.500 9 0v7c-3-1.500-6-1.500-9 0z" fill="#e8482a"/><path d="M12.500 2c3 1.500 6 1.500 9 0v7c-3 1.500-6 1.500-9 0z" fill="#5ac83a"/><path d="M2 10.500c3-1.500 6-1.500 9 0v7c-3-1.500-6-1.500-9 0z" fill="#3a7af0"/><path d="M12.500 10.500c3 1.500 6 1.500 9 0v7c-3 1.500-6 1.500-9 0z" fill="#f8c828"/></g></svg>
<div style="left:35px;top:1053px;font-size:17.5px;font-weight:bold;font-style:italic;line-height:24px;color:#fff;text-shadow:1px 2px 2px rgba(0,40,0,.8);letter-spacing:-.3px">пуск</div>
<div style="left:105px;top:1054px;width:2px;height:2px;background:#1a3a9a;box-shadow:1px 1px 0 #6a9af0"></div>
<div style="left:108px;top:1058px;width:2px;height:2px;background:#1a3a9a;box-shadow:1px 1px 0 #6a9af0"></div>
<div style="left:105px;top:1062px;width:2px;height:2px;background:#1a3a9a;box-shadow:1px 1px 0 #6a9af0"></div>
<div style="left:108px;top:1066px;width:2px;height:2px;background:#1a3a9a;box-shadow:1px 1px 0 #6a9af0"></div>
<div style="left:105px;top:1070px;width:2px;height:2px;background:#1a3a9a;box-shadow:1px 1px 0 #6a9af0"></div>
<div style="left:108px;top:1074px;width:2px;height:2px;background:#1a3a9a;box-shadow:1px 1px 0 #6a9af0"></div>
<div style="left:116px;top:1053px;width:158px;height:24px;background:linear-gradient(#5a9af8 0,#3a7ef0 12%,#3074ea 60%,#2a68dc);border:1px solid #1a3a98;border-radius:3px;box-shadow:inset 0 1px 1px rgba(255,255,255,.45),inset 0 -1px 1px rgba(0,0,60,.3);"></div>
<div style="left:144px;top:1058px;font-size:11px;line-height:15px;color:#fff">Ринат Абдрахманов ...</div>
<div style="left:276px;top:1053px;width:158px;height:24px;background:linear-gradient(#1a3e9a,#1e48b0 30%,#2150bc);border:1px solid #1a3a98;border-radius:3px;box-shadow:inset 1px 1px 2px rgba(0,0,40,.7);"></div>
<div style="left:304px;top:1058px;font-size:11px;line-height:15px;color:#fff">ZModeler ver 3.0.4 (...</div>
<div style="left:436px;top:1053px;width:158px;height:24px;background:linear-gradient(#5a9af8 0,#3a7ef0 12%,#3074ea 60%,#2a68dc);border:1px solid #1a3a98;border-radius:3px;box-shadow:inset 0 1px 1px rgba(255,255,255,.45),inset 0 -1px 1px rgba(0,0,60,.3);"></div>
<div style="left:464px;top:1058px;font-size:11px;line-height:15px;color:#fff">Euro Truck Simulator 2</div>
<svg style="left:125px;top:1057px" width="16" height="16" viewBox="0 0 16 16"><circle cx="8" cy="8" r="7.500" fill="#e8c828"/><path d="M8 8L1.500 4.200A7.500 7.500 0 0 1 14.500 4.200z" fill="#e03a2a"/><path d="M8 8L1.500 4.200A7.500 7.500 0 0 0 8 15.500l3.200-5.600z" fill="#3aa84a"/><circle cx="8" cy="8" r="3.400" fill="#fff"/><circle cx="8" cy="8" r="2.600" fill="#3a7ae8"/></svg>
<svg style="left:286px;top:1056px" width="14" height="18" viewBox="0 0 14 18"><path d="M2 2h10l-1 6-5 0-4 6z" fill="#e03030"/><path d="M12 4v12H2l0-2 5-6h5z" fill="#2040d0"/><path d="M4 4h6l-5 9h5" stroke="#fff" stroke-width="1.200" fill="none" opacity=".5"/></svg>
<svg style="left:444px;top:1057px" width="18" height="16" viewBox="0 0 18 16"><path d="M1 3h6l1.500 2H16v10H1z" fill="#e8c048" stroke="#8c6a14" stroke-width=".7"/><path d="M3 7h15l-2.500 8H1z" fill="#f8e088" stroke="#9c7a1c" stroke-width=".7"/></svg>
<div style="left:1789px;top:1051px;width:2px;height:2px;background:#1a3a9a;box-shadow:1px 1px 0 #6a9af0"></div>
<div style="left:1792px;top:1054px;width:2px;height:2px;background:#1a3a9a;box-shadow:1px 1px 0 #6a9af0"></div>
<div style="left:1789px;top:1058px;width:2px;height:2px;background:#1a3a9a;box-shadow:1px 1px 0 #6a9af0"></div>
<div style="left:1792px;top:1062px;width:2px;height:2px;background:#1a3a9a;box-shadow:1px 1px 0 #6a9af0"></div>
<div style="left:1789px;top:1065px;width:2px;height:2px;background:#1a3a9a;box-shadow:1px 1px 0 #6a9af0"></div>
<div style="left:1792px;top:1068px;width:2px;height:2px;background:#1a3a9a;box-shadow:1px 1px 0 #6a9af0"></div>
<div style="left:1789px;top:1072px;width:2px;height:2px;background:#1a3a9a;box-shadow:1px 1px 0 #6a9af0"></div>
<div style="left:1792px;top:1076px;width:2px;height:2px;background:#1a3a9a;box-shadow:1px 1px 0 #6a9af0"></div>
<div style="left:1800px;top:1056px;width:17px;height:17px;background:#2a5ac8;"></div>
<div style="left:1801px;top:1058px;font-size:11px;line-height:14px;color:#fff">EN</div>
<div style="left:1827px;top:1050px;width:93px;height:30px;background:linear-gradient(#2aa8f4 0,#1890e8 12%,#168ae4 60%,#1278cc);border-top:1px solid #1560b8;border-left:1px solid #0e4a98;box-shadow:inset 1px 0 0 #5ac0f8;"></div>
<svg style="left:1817px;top:1055px" width="21" height="21" viewBox="0 0 21 21"><circle cx="10.500" cy="10.500" r="9.500" fill="#2a80e8" stroke="#c8e0f8" stroke-width="1.300"/><path d="M12.500 6L7.500 10.500l5 4.500" stroke="#fff" stroke-width="2.200" fill="none"/></svg>
<svg style="left:1838px;top:1056px" width="18" height="18" viewBox="0 0 18 18"><rect x="1" y="2" width="11" height="14" fill="#fff"/><path d="M1 2h3v14H1zM5 9l6-7h3L8 9l6 7h-3z" fill="#e01828"/><rect x="10" y="9" width="7" height="7" fill="#333" stroke="#ddd" stroke-width=".8"/></svg>
<svg style="left:1856px;top:1056px" width="18" height="18" viewBox="0 0 18 18"><path d="M3 4c3-3 9-3 12 0 3 4 1 9-3 11-3 1-7 1-9-1-3-3-3-7 0-10z" fill="#6ac82a"/><path d="M5 9l3 3 5-6" stroke="#fff" stroke-width="2" fill="none"/></svg>
<div style="left:1881px;top:1058px;font-size:11px;line-height:14px;color:#fff">5:38</div>
</body></html>
